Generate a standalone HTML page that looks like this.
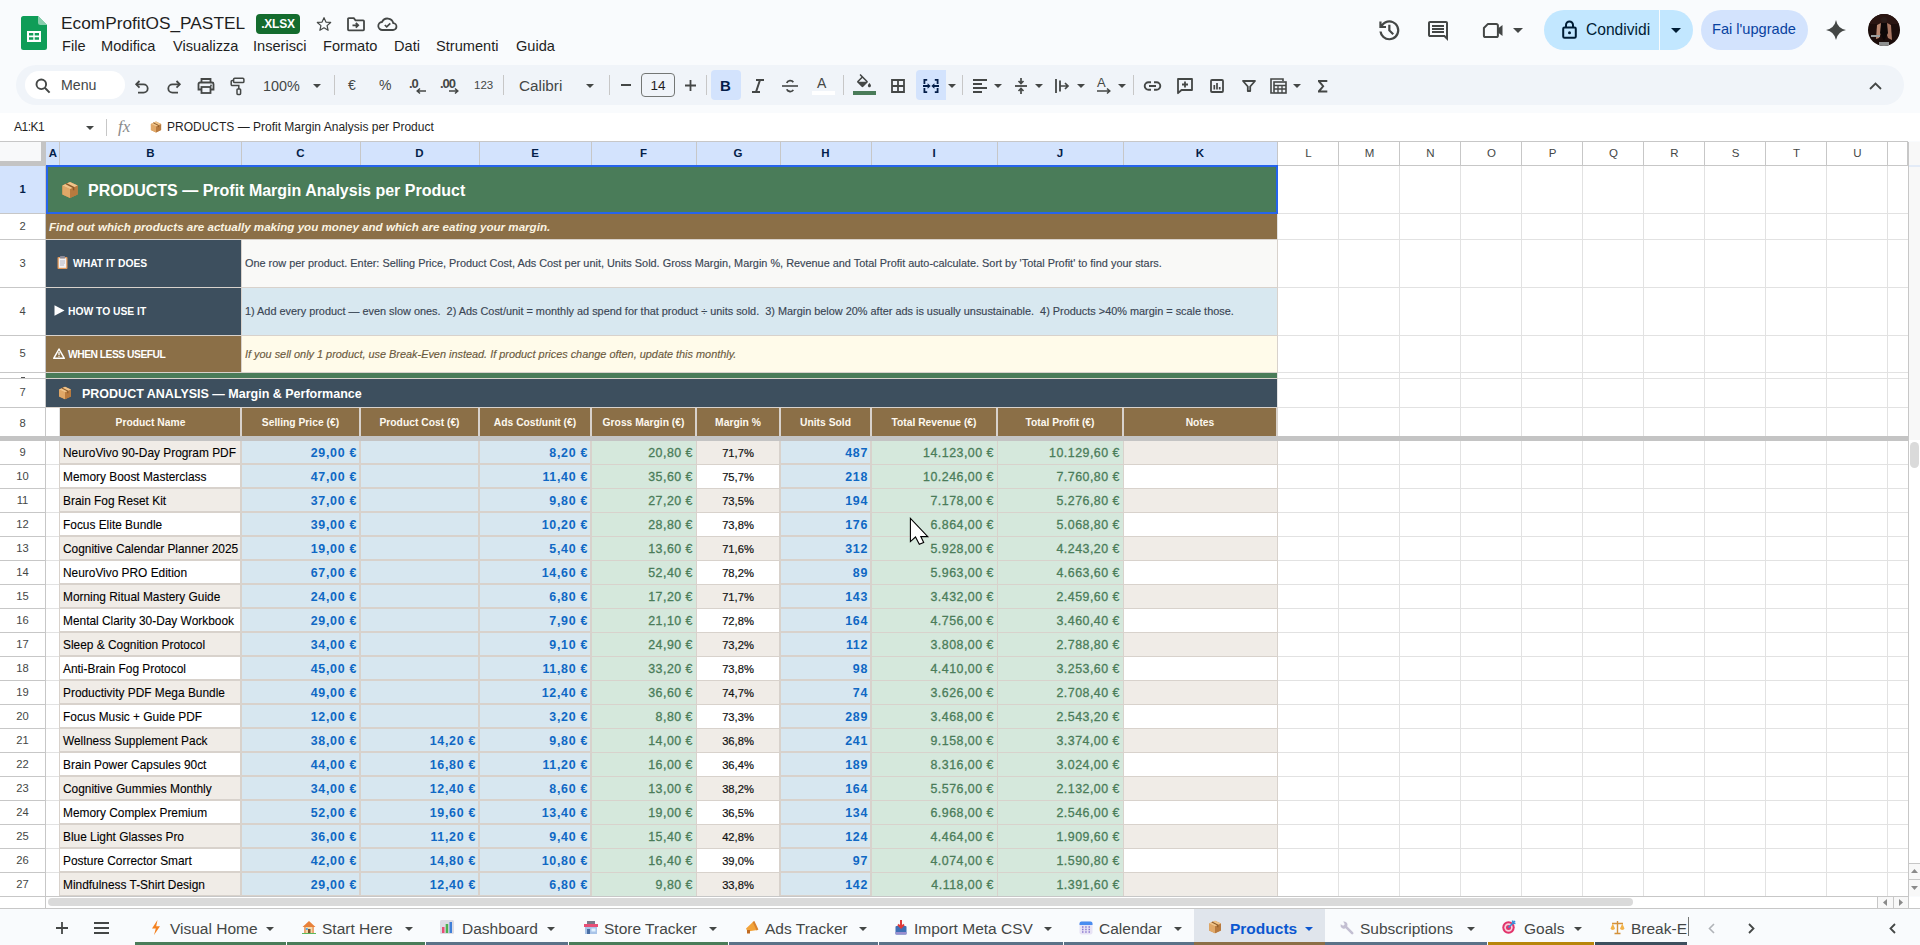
<!DOCTYPE html><html><head><meta charset="utf-8"><style>
*{margin:0;padding:0;box-sizing:border-box}
html,body{width:1920px;height:945px;overflow:hidden;background:#f9fbfd;font-family:"Liberation Sans",sans-serif}
body>div,#grid div{position:absolute}
.t{position:absolute;white-space:nowrap}
svg{position:absolute;overflow:visible}
.c{font-family:"Liberation Sans",sans-serif;white-space:nowrap;overflow:hidden;line-height:1}
</style></head><body>
<svg style="left:21px;top:16px" width="26" height="34" viewBox="0 0 26 34"><path d="M2.5 0H17l9 9v22.5a2.5 2.5 0 0 1-2.5 2.5h-21A2.5 2.5 0 0 1 0 31.5v-29A2.5 2.5 0 0 1 2.5 0z" fill="#0f9d58"/><path d="M17 0l9 9h-6.5A2.5 2.5 0 0 1 17 6.5z" fill="#87ceac"/><path d="M6 15h14v11H6z" fill="#fff"/><path d="M8 17h4.3v2.6H8zM13.7 17H18v2.6h-4.3zM8 21.2h4.3v2.6H8zM13.7 21.2H18v2.6h-4.3z" fill="#0f9d58"/></svg>
<div class="t" style="left:61px;top:13px;font-size:17.3px;color:#1f1f1f;letter-spacing:0px">EcomProfitOS_PASTEL</div>
<div style="left:256px;top:14px;width:44px;height:20px;background:#146c2e;border-radius:4px"></div>
<div class="t" style="left:256px;top:17px;width:44px;text-align:center;font-size:12px;font-weight:bold;color:#fff;letter-spacing:-0.2px">.XLSX</div>
<svg style="left:316px;top:16px" width="16" height="16" viewBox="0 0 24 24"><path d="M12 2.5l2.9 6.6 7.1.6-5.4 4.7 1.6 7-6.2-3.7-6.2 3.7 1.6-7L2 9.7l7.1-.6z" fill="none" stroke="#444746" stroke-width="1.8" stroke-linejoin="round"/></svg>
<svg style="left:347px;top:17px" width="18" height="14" viewBox="0 0 18 14"><path d="M1 2.2V12.5a.8.8 0 0 0 .8.8h14.4a.8.8 0 0 0 .8-.8V4.2a.8.8 0 0 0-.8-.8H8.5L6.8 1.2H1.8a.8.8 0 0 0-.8.8z" fill="none" stroke="#444746" stroke-width="1.8"/><path d="M5.5 8.3h5.2M8.8 6l2.4 2.3-2.4 2.3" fill="none" stroke="#444746" stroke-width="1.8"/></svg>
<svg style="left:378px;top:17px" width="19" height="14" viewBox="0 0 19 14"><path d="M4.6 13H14.8a3.4 3.4 0 0 0 .5-6.8A6 6 0 0 0 4 5a4 4 0 0 0 .6 8z" fill="none" stroke="#444746" stroke-width="1.8"/><path d="M6.8 8l1.9 1.9 3.6-3.6" fill="none" stroke="#444746" stroke-width="1.7"/></svg>
<div class="t" style="left:62px;top:38px;font-size:14.6px;color:#1f1f1f">File</div>
<div class="t" style="left:101px;top:38px;font-size:14.6px;color:#1f1f1f">Modifica</div>
<div class="t" style="left:173px;top:38px;font-size:14.6px;color:#1f1f1f">Visualizza</div>
<div class="t" style="left:253px;top:38px;font-size:14.6px;color:#1f1f1f">Inserisci</div>
<div class="t" style="left:323px;top:38px;font-size:14.6px;color:#1f1f1f">Formato</div>
<div class="t" style="left:394px;top:38px;font-size:14.6px;color:#1f1f1f">Dati</div>
<div class="t" style="left:436px;top:38px;font-size:14.6px;color:#1f1f1f">Strumenti</div>
<div class="t" style="left:516px;top:38px;font-size:14.6px;color:#1f1f1f">Guida</div>
<svg style="left:1375.7px;top:16.7px" width="26.7" height="26.7" viewBox="0 -960 960 960"><path d="M480-120q-138 0-240.5-91.5T122-440h82q14 104 92.5 172T480-200q117 0 198.5-81.5T760-480q0-117-81.5-198.5T480-760q-69 0-129 32t-101 88h110v80H120v-240h80v94q51-64 124.5-99T480-840q75 0 140.5 28.5t114 77q48.5 48.5 77 114T840-480q0 75-28.5 140.5t-77 114q-48.5 48.5-114 77T480-120Zm112-192L440-464v-216h80v184l128 128-56 56Z" fill="#444746"/></svg>
<svg style="left:1426px;top:19px" width="24" height="24" viewBox="0 -960 960 960"><path d="M240-400h480v-80H240v80Zm0-120h480v-80H240v80Zm0-120h480v-80H240v80ZM880-80 720-240H160q-33 0-56.5-23.5T80-320v-480q0-33 23.5-56.5T160-880h640q33 0 56.5 23.5T880-800v720ZM160-320h594l46 45v-525H160v480Zm0 0v-480 480Z" fill="#444746"/></svg>
<svg style="left:1482px;top:22px" width="22" height="17" viewBox="0 0 22 17"><path d="M6 1.9h8.3a1.6 1.6 0 0 1 1.6 1.6v10a1.6 1.6 0 0 1-1.6 1.6H3.5a1.6 1.6 0 0 1-1.6-1.6V6z" fill="none" stroke="#444746" stroke-width="2" stroke-linejoin="round"/><path d="M15.9 6.5L20.5 3v11l-4.6-3.5z" fill="#444746"/></svg>
<svg style="left:1513px;top:28px" width="10" height="5" viewBox="0 0 10 5"><path d="M0 0h10L5 5z" fill="#444746"/></svg>
<div style="left:1544px;top:10px;width:149px;height:40px;background:#c2e7ff;border-radius:20px"></div>
<div style="left:1659px;top:10px;width:1px;height:40px;background:#f9fbfd"></div>
<svg style="left:1562px;top:20px" width="15" height="19" viewBox="0 0 15 19"><rect x="1.2" y="7.5" width="12.6" height="10.3" rx="1.3" fill="none" stroke="#001d35" stroke-width="2"/><path d="M4 7.5V5a3.5 3.5 0 0 1 7 0v2.5" fill="none" stroke="#001d35" stroke-width="2"/><circle cx="7.5" cy="12.7" r="1.5" fill="#001d35"/></svg>
<div class="t" style="left:1586px;top:21px;font-size:15.6px;color:#001d35">Condividi</div>
<svg style="left:1671px;top:28px" width="10" height="5" viewBox="0 0 10 5"><path d="M0 0h10L5 5z" fill="#001d35"/></svg>
<div style="left:1701px;top:10px;width:107px;height:40px;background:#d3e3fd;border-radius:20px"></div>
<div class="t" style="left:1712px;top:21px;font-size:14.6px;color:#0842a0">Fai l'upgrade</div>
<svg style="left:1826px;top:20px" width="20" height="20" viewBox="0 0 20 20"><path d="M10 0Q11.6 8.4 20 10 11.6 11.6 10 20 8.4 11.6 0 10 8.4 8.4 10 0z" fill="#444746"/></svg>
<svg style="left:1868px;top:14px" width="32" height="32" viewBox="0 0 32 32"><defs><clipPath id="av"><circle cx="16" cy="16" r="16"/></clipPath></defs><g clip-path="url(#av)"><rect width="32" height="32" fill="#1c0d0b"/><rect x="0" y="0" width="32" height="10" fill="#2a1512"/><path d="M9 11l4-2 2 6-4 9-3 1z" fill="#b98770"/><path d="M23 11l-4-2-2 6 3 9 4 2z" fill="#a87662"/><path d="M13 9h6l1 10-4 8-4-8z" fill="#0d0808"/><rect x="3" y="21" width="9" height="2" fill="#9aa0a0"/><rect x="11" y="28" width="10" height="4" fill="#8f9090"/><circle cx="16" cy="6" r="3" fill="#2b1d1a"/></g></svg>
<div style="left:16px;top:65px;width:1888px;height:40px;background:#f0f4f9;border-radius:20px"></div>
<div style="left:25px;top:71px;width:100px;height:28px;background:#fff;border-radius:14px"></div>
<svg style="left:35px;top:78px" width="16" height="16" viewBox="0 0 16 16"><circle cx="6.3" cy="6.3" r="4.8" fill="none" stroke="#444746" stroke-width="1.9"/><path d="M9.8 9.8l4.8 4.8" stroke="#444746" stroke-width="2"/></svg>
<div class="t" style="left:61px;top:77px;font-size:14.2px;color:#444746">Menu</div>
<svg style="left:135px;top:80px" width="14" height="13" viewBox="0 0 14 13"><path d="M4.5 1L1.2 4.3l3.3 3.3" fill="none" stroke="#444746" stroke-width="1.8"/><path d="M1.5 4.3H8.5a4.2 4.2 0 0 1 0 8.4H3" fill="none" stroke="#444746" stroke-width="1.8"/></svg>
<svg style="left:167px;top:80px" width="14" height="13" viewBox="0 0 14 13"><path d="M9.5 1l3.3 3.3-3.3 3.3" fill="none" stroke="#444746" stroke-width="1.8"/><path d="M12.5 4.3H5.5a4.2 4.2 0 0 0 0 8.4H11" fill="none" stroke="#444746" stroke-width="1.8"/></svg>
<svg style="left:197px;top:78px" width="18" height="16" viewBox="0 0 18 16"><path d="M4.5 4.5V1h9v3.5" fill="none" stroke="#444746" stroke-width="1.8"/><path d="M4.5 11.5H1.5V6a1.5 1.5 0 0 1 1.5-1.5h12A1.5 1.5 0 0 1 16.5 6v5.5h-3" fill="none" stroke="#444746" stroke-width="1.8"/><rect x="4.5" y="9" width="9" height="6" fill="none" stroke="#444746" stroke-width="1.8"/><circle cx="14" cy="7.3" r=".9" fill="#444746"/></svg>
<svg style="left:228px;top:76px" width="18" height="20" viewBox="0 0 18 20"><rect x="5.6" y="2.3" width="10.3" height="4.2" rx="1.1" fill="none" stroke="#444746" stroke-width="1.5"/><path d="M5.6 4.4H4.3a1.1 1.1 0 0 0-1.1 1.1v3a1.1 1.1 0 0 0 1.1 1.1h6.5v3.4" fill="none" stroke="#444746" stroke-width="1.5"/><rect x="9" y="13" width="3.6" height="5.4" rx=".8" fill="none" stroke="#444746" stroke-width="1.5"/></svg>
<div class="t" style="left:263px;top:78px;font-size:14.4px;color:#444746">100%</div>
<svg style="left:313px;top:84px" width="8" height="4" viewBox="0 0 8 4"><path d="M0 0h8L4 4z" fill="#444746"/></svg>
<div style="left:334px;top:75px;width:1px;height:20px;background:#c7c7c7"></div>
<div class="t" style="left:348px;top:77px;font-size:14px;color:#444746">€</div>
<div class="t" style="left:379px;top:77px;font-size:14px;color:#444746">%</div>
<div class="t" style="left:409px;top:76px;font-size:13px;font-weight:bold;color:#444746;letter-spacing:-1px">.0</div>
<svg style="left:416px;top:88px" width="10" height="6" viewBox="0 0 10 6"><path d="M10 3H2M4 .5L1.2 3 4 5.5" fill="none" stroke="#444746" stroke-width="1.5"/></svg>
<div class="t" style="left:440px;top:76px;font-size:13px;font-weight:bold;color:#444746;letter-spacing:-1px">.00</div>
<svg style="left:449px;top:88px" width="10" height="6" viewBox="0 0 10 6"><path d="M0 3h8M6 .5L8.8 3 6 5.5" fill="none" stroke="#444746" stroke-width="1.5"/></svg>
<div class="t" style="left:474px;top:79px;font-size:11.5px;color:#444746">123</div>
<div style="left:503px;top:75px;width:1px;height:20px;background:#c7c7c7"></div>
<div class="t" style="left:519px;top:77px;font-size:15.3px;color:#444746">Calibri</div>
<svg style="left:586px;top:84px" width="8" height="4" viewBox="0 0 8 4"><path d="M0 0h8L4 4z" fill="#444746"/></svg>
<div style="left:609px;top:75px;width:1px;height:20px;background:#c7c7c7"></div>
<div style="left:621px;top:84px;width:10px;height:1.8px;background:#444746"></div>
<div style="left:641px;top:73px;width:34px;height:24px;border:1px solid #747775;border-radius:4px"></div>
<div class="t" style="left:641px;top:78px;width:34px;text-align:center;font-size:13.5px;color:#1f1f1f">14</div>
<svg style="left:685px;top:80px" width="11" height="11" viewBox="0 0 11 11"><path d="M5.5 0v11M0 5.5h11" stroke="#444746" stroke-width="1.8"/></svg>
<div style="left:706px;top:75px;width:1px;height:20px;background:#c7c7c7"></div>
<div style="left:711px;top:70px;width:30px;height:30px;background:#d3e3fd;border-radius:4px"></div>
<div class="t" style="left:720px;top:77px;font-size:15px;font-weight:bold;color:#041e49">B</div>
<svg style="left:752px;top:79px" width="12" height="14" viewBox="0 0 12 14"><path d="M4 1h8M0 13h8M8 1L4 13" fill="none" stroke="#444746" stroke-width="2"/></svg>
<svg style="left:782px;top:78px" width="16" height="16" viewBox="0 0 16 16"><path d="M0 8h16" stroke="#444746" stroke-width="1.6"/><path d="M11.3 4.3A3.5 3 0 0 0 4.8 5M4.8 11.3a3.5 3 0 0 0 6.5.6" fill="none" stroke="#444746" stroke-width="1.8"/></svg>
<div class="t" style="left:817px;top:75px;font-size:14px;color:#444746">A</div>
<div style="left:812px;top:91px;width:23px;height:4px;background:#fff"></div>
<div style="left:843px;top:75px;width:1px;height:20px;background:#c7c7c7"></div>
<svg style="left:857px;top:74px" width="14" height="13.2" viewBox="3 0 18 17"><path d="M16.56 8.94L7.62 0 6.21 1.41l2.38 2.38-5.15 5.15c-.59.59-.59 1.54 0 2.12l5.5 5.5c.29.29.68.44 1.06.44s.77-.15 1.06-.44l5.5-5.5c.59-.58.59-1.53 0-2.12zM5.21 10L10 5.21 14.79 10H5.21zM19 11.5s-2 2.17-2 3.5c0 1.1.9 2 2 2s2-.9 2-2c0-1.33-2-3.5-2-3.5z" fill="#444746"/></svg>
<div style="left:853px;top:91px;width:23px;height:4px;background:#4a7c59"></div>
<svg style="left:891px;top:79px" width="14" height="14" viewBox="0 0 14 14"><path d="M1 1h12v12H1zM7 1v12M1 7h12" fill="none" stroke="#444746" stroke-width="1.8"/></svg>
<div style="left:916px;top:70px;width:30px;height:30px;background:#d3e3fd;border-radius:4px 0 0 4px"></div>
<svg style="left:923px;top:79px" width="16" height="14" viewBox="0 0 16 14"><path d="M4.2 .9H1.4V5M1.4 9v4.1h2.8M11.8 .9h2.8V5M14.6 9v4.1h-2.8" fill="none" stroke="#041e49" stroke-width="1.8"/><path d="M0 7h5.5M16 7h-5.5" stroke="#041e49" stroke-width="1.8"/><path d="M4.6 4.2L7.6 7l-3 2.8zM11.4 4.2L8.4 7l3 2.8z" fill="#041e49"/></svg>
<svg style="left:948px;top:84px" width="8" height="4" viewBox="0 0 8 4"><path d="M0 0h8L4 4z" fill="#444746"/></svg>
<div style="left:962px;top:75px;width:1px;height:20px;background:#c7c7c7"></div>
<svg style="left:973px;top:79px" width="14" height="14" viewBox="0 0 14 14"><path d="M0 1h14M0 5h9M0 9h14M0 13h9" stroke="#444746" stroke-width="1.8"/></svg>
<svg style="left:994px;top:84px" width="8" height="4" viewBox="0 0 8 4"><path d="M0 0h8L4 4z" fill="#444746"/></svg>
<svg style="left:1015px;top:78px" width="12" height="16" viewBox="0 0 12 16"><path d="M0 8h12" stroke="#444746" stroke-width="1.8"/><path d="M6 0v5.5M3.5 3L6 5.5 8.5 3M6 16v-5.5M3.5 13L6 10.5 8.5 13" fill="none" stroke="#444746" stroke-width="1.7"/></svg>
<svg style="left:1035px;top:84px" width="8" height="4" viewBox="0 0 8 4"><path d="M0 0h8L4 4z" fill="#444746"/></svg>
<svg style="left:1055px;top:78px" width="14" height="16" viewBox="0 0 14 16"><path d="M1 1v14M5 2.5v11" stroke="#444746" stroke-width="1.8"/><path d="M5 8h8M10 5l3 3-3 3" fill="none" stroke="#444746" stroke-width="1.7"/></svg>
<svg style="left:1077px;top:84px" width="8" height="4" viewBox="0 0 8 4"><path d="M0 0h8L4 4z" fill="#444746"/></svg>
<div class="t" style="left:1097px;top:75px;font-size:13px;color:#444746">A</div>
<svg style="left:1097px;top:88px" width="14" height="6" viewBox="0 0 14 6"><path d="M0 3h12M10 .5L12.8 3 10 5.5" fill="none" stroke="#444746" stroke-width="1.5"/></svg>
<svg style="left:1118px;top:84px" width="8" height="4" viewBox="0 0 8 4"><path d="M0 0h8L4 4z" fill="#444746"/></svg>
<div style="left:1133px;top:75px;width:1px;height:20px;background:#c7c7c7"></div>
<svg style="left:1144px;top:81px" width="17" height="10" viewBox="0 0 17 10"><path d="M7 1.2H4.5a3.8 3.8 0 0 0 0 7.6H7M10 1.2h2.5a3.8 3.8 0 0 1 0 7.6H10M5 5h7" fill="none" stroke="#444746" stroke-width="1.9"/></svg>
<svg style="left:1177px;top:78px" width="16" height="16" viewBox="0 0 16 16"><path d="M1 1h14v11H4.5L1 15.2z" fill="none" stroke="#444746" stroke-width="1.8" stroke-linejoin="round"/><path d="M8 3.5v6M5 6.5h6" stroke="#444746" stroke-width="1.8"/></svg>
<svg style="left:1210px;top:79px" width="14" height="14" viewBox="0 0 14 14"><rect x="1" y="1" width="12" height="12" rx="1" fill="none" stroke="#444746" stroke-width="1.8"/><path d="M4.3 6v4.5M7 4v6.5M9.7 8v2.5" stroke="#444746" stroke-width="1.7"/></svg>
<svg style="left:1242px;top:80px" width="14" height="12" viewBox="0 0 14 12"><path d="M1 1h12L8.2 6.5V11H5.8V6.5z" fill="none" stroke="#444746" stroke-width="1.8" stroke-linejoin="round"/></svg>
<svg style="left:1270px;top:78px" width="17" height="16" viewBox="0 0 17 16"><path d="M3.5 15H1V1h12v2" fill="none" stroke="#444746" stroke-width="1.6"/><rect x="4" y="4" width="12" height="11" fill="none" stroke="#444746" stroke-width="1.6"/><path d="M4 7.5h12M4 11h12M8 7.5V15M12 7.5V15" stroke="#444746" stroke-width="1.3"/></svg>
<svg style="left:1293px;top:84px" width="8" height="4" viewBox="0 0 8 4"><path d="M0 0h8L4 4z" fill="#444746"/></svg>
<svg style="left:1318px;top:80px" width="9.5" height="12.5" viewBox="0 0 9.5 12.5"><path d="M0 0h9.3v1.9H2.9L6.4 6.25 2.9 10.6h6.4v1.9H0v-1.7L4 6.25 0 1.7z" fill="#444746"/></svg>
<svg style="left:1869px;top:82px" width="13" height="8" viewBox="0 0 13 8"><path d="M1 7L6.5 1.5 12 7" fill="none" stroke="#444746" stroke-width="1.8"/></svg>
<div style="left:0;top:113px;width:1920px;height:28px;background:#fff"></div>
<div class="t" style="left:14px;top:120px;font-size:12px;letter-spacing:-0.5px;color:#1f1f1f">A1:K1</div>
<svg style="left:86px;top:126px" width="8" height="4" viewBox="0 0 8 4"><path d="M0 0h8L4 4z" fill="#444746"/></svg>
<div style="left:106px;top:119px;width:1px;height:17px;background:#c7c7c7"></div>
<div class="t" style="left:118px;top:117px;font-size:17px;font-style:italic;color:#8a8a8a;font-family:'Liberation Serif',serif">fx</div>
<svg style="left:150px;top:121px" width="12" height="12" viewBox="0 0 20 20"><path d="M10 1L18.5 5v10L10 19 1.5 15V5z" fill="#c98a4b"/><path d="M1.5 5L10 9v10L1.5 15z" fill="#e0a868"/><path d="M10 9L18.5 5v10L10 19z" fill="#b87a3e"/><path d="M10 1L18.5 5 10 9 1.5 5z" fill="#f0c48a"/><path d="M5.5 3L14 7.2v3" fill="none" stroke="#8a5a2a" stroke-width="1.6"/></svg>
<div class="t" style="left:167px;top:120px;font-size:12px;color:#1f1f1f">PRODUCTS — Profit Margin Analysis per Product</div>
<div style="left:0;top:141px;width:1908px;height:1px;background:#c7c7c7"></div>
<div style="left:0;top:142px;width:41px;height:19px;background:#f8f9fa"></div>
<div style="left:41px;top:142px;width:5px;height:24px;background:#c4c4c4"></div>
<div style="left:0;top:161px;width:46px;height:5px;background:#c4c4c4"></div>
<div style="left:46px;top:142px;width:1231px;height:23px;background:#d3e3fd"></div>
<div style="left:1277px;top:142px;width:631px;height:23px;background:#fff"></div>
<div style="left:46px;top:165px;width:1862px;height:1px;background:#c7c7c7"></div>
<div class="t" style="left:46px;top:147px;width:14px;text-align:center;font-size:11.5px;font-weight:bold;color:#041e49">A</div>
<div class="t" style="left:60px;top:147px;width:181px;text-align:center;font-size:11.5px;font-weight:bold;color:#041e49">B</div>
<div style="left:59px;top:142px;width:1px;height:23px;background:#c7c7c7"></div>
<div class="t" style="left:241px;top:147px;width:119px;text-align:center;font-size:11.5px;font-weight:bold;color:#041e49">C</div>
<div style="left:241px;top:142px;width:1px;height:23px;background:#c7c7c7"></div>
<div class="t" style="left:360px;top:147px;width:119px;text-align:center;font-size:11.5px;font-weight:bold;color:#041e49">D</div>
<div style="left:360px;top:142px;width:1px;height:23px;background:#c7c7c7"></div>
<div class="t" style="left:479px;top:147px;width:112px;text-align:center;font-size:11.5px;font-weight:bold;color:#041e49">E</div>
<div style="left:479px;top:142px;width:1px;height:23px;background:#c7c7c7"></div>
<div class="t" style="left:591px;top:147px;width:105px;text-align:center;font-size:11.5px;font-weight:bold;color:#041e49">F</div>
<div style="left:591px;top:142px;width:1px;height:23px;background:#c7c7c7"></div>
<div class="t" style="left:696px;top:147px;width:84px;text-align:center;font-size:11.5px;font-weight:bold;color:#041e49">G</div>
<div style="left:696px;top:142px;width:1px;height:23px;background:#c7c7c7"></div>
<div class="t" style="left:780px;top:147px;width:91px;text-align:center;font-size:11.5px;font-weight:bold;color:#041e49">H</div>
<div style="left:780px;top:142px;width:1px;height:23px;background:#c7c7c7"></div>
<div class="t" style="left:871px;top:147px;width:126px;text-align:center;font-size:11.5px;font-weight:bold;color:#041e49">I</div>
<div style="left:871px;top:142px;width:1px;height:23px;background:#c7c7c7"></div>
<div class="t" style="left:997px;top:147px;width:126px;text-align:center;font-size:11.5px;font-weight:bold;color:#041e49">J</div>
<div style="left:997px;top:142px;width:1px;height:23px;background:#c7c7c7"></div>
<div class="t" style="left:1123px;top:147px;width:154px;text-align:center;font-size:11.5px;font-weight:bold;color:#041e49">K</div>
<div style="left:1123px;top:142px;width:1px;height:23px;background:#c7c7c7"></div>
<div class="t" style="left:1278px;top:147px;width:61px;text-align:center;font-size:11.5px;font-weight:normal;color:#444746">L</div>
<div style="left:1277px;top:142px;width:1px;height:23px;background:#c7c7c7"></div>
<div class="t" style="left:1339px;top:147px;width:61px;text-align:center;font-size:11.5px;font-weight:normal;color:#444746">M</div>
<div style="left:1338px;top:142px;width:1px;height:23px;background:#c7c7c7"></div>
<div class="t" style="left:1400px;top:147px;width:61px;text-align:center;font-size:11.5px;font-weight:normal;color:#444746">N</div>
<div style="left:1399px;top:142px;width:1px;height:23px;background:#c7c7c7"></div>
<div class="t" style="left:1461px;top:147px;width:61px;text-align:center;font-size:11.5px;font-weight:normal;color:#444746">O</div>
<div style="left:1460px;top:142px;width:1px;height:23px;background:#c7c7c7"></div>
<div class="t" style="left:1522px;top:147px;width:61px;text-align:center;font-size:11.5px;font-weight:normal;color:#444746">P</div>
<div style="left:1521px;top:142px;width:1px;height:23px;background:#c7c7c7"></div>
<div class="t" style="left:1583px;top:147px;width:61px;text-align:center;font-size:11.5px;font-weight:normal;color:#444746">Q</div>
<div style="left:1582px;top:142px;width:1px;height:23px;background:#c7c7c7"></div>
<div class="t" style="left:1644px;top:147px;width:61px;text-align:center;font-size:11.5px;font-weight:normal;color:#444746">R</div>
<div style="left:1643px;top:142px;width:1px;height:23px;background:#c7c7c7"></div>
<div class="t" style="left:1705px;top:147px;width:61px;text-align:center;font-size:11.5px;font-weight:normal;color:#444746">S</div>
<div style="left:1704px;top:142px;width:1px;height:23px;background:#c7c7c7"></div>
<div class="t" style="left:1766px;top:147px;width:61px;text-align:center;font-size:11.5px;font-weight:normal;color:#444746">T</div>
<div style="left:1765px;top:142px;width:1px;height:23px;background:#c7c7c7"></div>
<div class="t" style="left:1827px;top:147px;width:61px;text-align:center;font-size:11.5px;font-weight:normal;color:#444746">U</div>
<div style="left:1826px;top:142px;width:1px;height:23px;background:#c7c7c7"></div>
<div style="left:1887px;top:142px;width:1px;height:23px;background:#c7c7c7"></div>
<div style="left:1907px;top:142px;width:1px;height:23px;background:#c7c7c7"></div>
<div style="left:0;top:166px;width:45px;height:730px;background:#fff"></div>
<div style="left:0;top:166px;width:45px;height:47px;background:#d3e3fd"></div>
<div style="left:45px;top:166px;width:1px;height:730px;background:#c7c7c7"></div>
<div class="t" style="left:0;top:183px;width:45px;text-align:center;font-size:11.2px;font-weight:bold;color:#041e49">1</div>
<div class="t" style="left:0;top:220px;width:45px;text-align:center;font-size:11.2px;color:#444746">2</div>
<div class="t" style="left:0;top:257px;width:45px;text-align:center;font-size:11.2px;color:#444746">3</div>
<div class="t" style="left:0;top:305px;width:45px;text-align:center;font-size:11.2px;color:#444746">4</div>
<div class="t" style="left:0;top:347px;width:45px;text-align:center;font-size:11.2px;color:#444746">5</div>
<div class="t" style="left:0;top:386px;width:45px;text-align:center;font-size:11.2px;color:#444746">7</div>
<div class="t" style="left:0;top:417px;width:45px;text-align:center;font-size:11.2px;color:#444746">8</div>
<div class="t" style="left:0;top:446px;width:45px;text-align:center;font-size:11.2px;color:#444746">9</div>
<div class="t" style="left:0;top:470px;width:45px;text-align:center;font-size:11.2px;color:#444746">10</div>
<div class="t" style="left:0;top:494px;width:45px;text-align:center;font-size:11.2px;color:#444746">11</div>
<div class="t" style="left:0;top:518px;width:45px;text-align:center;font-size:11.2px;color:#444746">12</div>
<div class="t" style="left:0;top:542px;width:45px;text-align:center;font-size:11.2px;color:#444746">13</div>
<div class="t" style="left:0;top:566px;width:45px;text-align:center;font-size:11.2px;color:#444746">14</div>
<div class="t" style="left:0;top:590px;width:45px;text-align:center;font-size:11.2px;color:#444746">15</div>
<div class="t" style="left:0;top:614px;width:45px;text-align:center;font-size:11.2px;color:#444746">16</div>
<div class="t" style="left:0;top:638px;width:45px;text-align:center;font-size:11.2px;color:#444746">17</div>
<div class="t" style="left:0;top:662px;width:45px;text-align:center;font-size:11.2px;color:#444746">18</div>
<div class="t" style="left:0;top:686px;width:45px;text-align:center;font-size:11.2px;color:#444746">19</div>
<div class="t" style="left:0;top:710px;width:45px;text-align:center;font-size:11.2px;color:#444746">20</div>
<div class="t" style="left:0;top:734px;width:45px;text-align:center;font-size:11.2px;color:#444746">21</div>
<div class="t" style="left:0;top:758px;width:45px;text-align:center;font-size:11.2px;color:#444746">22</div>
<div class="t" style="left:0;top:782px;width:45px;text-align:center;font-size:11.2px;color:#444746">23</div>
<div class="t" style="left:0;top:806px;width:45px;text-align:center;font-size:11.2px;color:#444746">24</div>
<div class="t" style="left:0;top:830px;width:45px;text-align:center;font-size:11.2px;color:#444746">25</div>
<div class="t" style="left:0;top:854px;width:45px;text-align:center;font-size:11.2px;color:#444746">26</div>
<div class="t" style="left:0;top:878px;width:45px;text-align:center;font-size:11.2px;color:#444746">27</div>
<div style="left:0;top:213px;width:45px;height:1px;background:#c7c7c7"></div>
<div style="left:0;top:239px;width:45px;height:1px;background:#c7c7c7"></div>
<div style="left:0;top:287px;width:45px;height:1px;background:#c7c7c7"></div>
<div style="left:0;top:335px;width:45px;height:1px;background:#c7c7c7"></div>
<div style="left:0;top:372px;width:45px;height:1px;background:#c7c7c7"></div>
<div style="left:0;top:378px;width:45px;height:1px;background:#c7c7c7"></div>
<div style="left:0;top:407px;width:45px;height:1px;background:#c7c7c7"></div>
<div style="left:0;top:464px;width:45px;height:1px;background:#c7c7c7"></div>
<div style="left:0;top:488px;width:45px;height:1px;background:#c7c7c7"></div>
<div style="left:0;top:512px;width:45px;height:1px;background:#c7c7c7"></div>
<div style="left:0;top:536px;width:45px;height:1px;background:#c7c7c7"></div>
<div style="left:0;top:560px;width:45px;height:1px;background:#c7c7c7"></div>
<div style="left:0;top:584px;width:45px;height:1px;background:#c7c7c7"></div>
<div style="left:0;top:608px;width:45px;height:1px;background:#c7c7c7"></div>
<div style="left:0;top:632px;width:45px;height:1px;background:#c7c7c7"></div>
<div style="left:0;top:656px;width:45px;height:1px;background:#c7c7c7"></div>
<div style="left:0;top:680px;width:45px;height:1px;background:#c7c7c7"></div>
<div style="left:0;top:704px;width:45px;height:1px;background:#c7c7c7"></div>
<div style="left:0;top:728px;width:45px;height:1px;background:#c7c7c7"></div>
<div style="left:0;top:752px;width:45px;height:1px;background:#c7c7c7"></div>
<div style="left:0;top:776px;width:45px;height:1px;background:#c7c7c7"></div>
<div style="left:0;top:800px;width:45px;height:1px;background:#c7c7c7"></div>
<div style="left:0;top:824px;width:45px;height:1px;background:#c7c7c7"></div>
<div style="left:0;top:848px;width:45px;height:1px;background:#c7c7c7"></div>
<div style="left:0;top:872px;width:45px;height:1px;background:#c7c7c7"></div>
<div style="left:0;top:896px;width:45px;height:1px;background:#c7c7c7"></div>
<div style="left:21px;top:377px;width:4px;height:1px;background:#555"></div>
<div style="left:46px;top:166px;width:1862px;height:730px;background:#fff"></div>
<div style="left:59px;top:166px;width:1px;height:730px;background:#e2e2e2"></div>
<div style="left:241px;top:166px;width:1px;height:730px;background:#e2e2e2"></div>
<div style="left:360px;top:166px;width:1px;height:730px;background:#e2e2e2"></div>
<div style="left:479px;top:166px;width:1px;height:730px;background:#e2e2e2"></div>
<div style="left:591px;top:166px;width:1px;height:730px;background:#e2e2e2"></div>
<div style="left:696px;top:166px;width:1px;height:730px;background:#e2e2e2"></div>
<div style="left:780px;top:166px;width:1px;height:730px;background:#e2e2e2"></div>
<div style="left:871px;top:166px;width:1px;height:730px;background:#e2e2e2"></div>
<div style="left:997px;top:166px;width:1px;height:730px;background:#e2e2e2"></div>
<div style="left:1123px;top:166px;width:1px;height:730px;background:#e2e2e2"></div>
<div style="left:1277px;top:166px;width:1px;height:730px;background:#e2e2e2"></div>
<div style="left:1338px;top:166px;width:1px;height:730px;background:#e2e2e2"></div>
<div style="left:1399px;top:166px;width:1px;height:730px;background:#e2e2e2"></div>
<div style="left:1460px;top:166px;width:1px;height:730px;background:#e2e2e2"></div>
<div style="left:1521px;top:166px;width:1px;height:730px;background:#e2e2e2"></div>
<div style="left:1582px;top:166px;width:1px;height:730px;background:#e2e2e2"></div>
<div style="left:1643px;top:166px;width:1px;height:730px;background:#e2e2e2"></div>
<div style="left:1704px;top:166px;width:1px;height:730px;background:#e2e2e2"></div>
<div style="left:1765px;top:166px;width:1px;height:730px;background:#e2e2e2"></div>
<div style="left:1826px;top:166px;width:1px;height:730px;background:#e2e2e2"></div>
<div style="left:1887px;top:166px;width:1px;height:730px;background:#e2e2e2"></div>
<div style="left:46px;top:213px;width:1862px;height:1px;background:#e2e2e2"></div>
<div style="left:46px;top:239px;width:1862px;height:1px;background:#e2e2e2"></div>
<div style="left:46px;top:287px;width:1862px;height:1px;background:#e2e2e2"></div>
<div style="left:46px;top:335px;width:1862px;height:1px;background:#e2e2e2"></div>
<div style="left:46px;top:372px;width:1862px;height:1px;background:#e2e2e2"></div>
<div style="left:46px;top:378px;width:1862px;height:1px;background:#e2e2e2"></div>
<div style="left:46px;top:407px;width:1862px;height:1px;background:#e2e2e2"></div>
<div style="left:46px;top:464px;width:1862px;height:1px;background:#e2e2e2"></div>
<div style="left:46px;top:488px;width:1862px;height:1px;background:#e2e2e2"></div>
<div style="left:46px;top:512px;width:1862px;height:1px;background:#e2e2e2"></div>
<div style="left:46px;top:536px;width:1862px;height:1px;background:#e2e2e2"></div>
<div style="left:46px;top:560px;width:1862px;height:1px;background:#e2e2e2"></div>
<div style="left:46px;top:584px;width:1862px;height:1px;background:#e2e2e2"></div>
<div style="left:46px;top:608px;width:1862px;height:1px;background:#e2e2e2"></div>
<div style="left:46px;top:632px;width:1862px;height:1px;background:#e2e2e2"></div>
<div style="left:46px;top:656px;width:1862px;height:1px;background:#e2e2e2"></div>
<div style="left:46px;top:680px;width:1862px;height:1px;background:#e2e2e2"></div>
<div style="left:46px;top:704px;width:1862px;height:1px;background:#e2e2e2"></div>
<div style="left:46px;top:728px;width:1862px;height:1px;background:#e2e2e2"></div>
<div style="left:46px;top:752px;width:1862px;height:1px;background:#e2e2e2"></div>
<div style="left:46px;top:776px;width:1862px;height:1px;background:#e2e2e2"></div>
<div style="left:46px;top:800px;width:1862px;height:1px;background:#e2e2e2"></div>
<div style="left:46px;top:824px;width:1862px;height:1px;background:#e2e2e2"></div>
<div style="left:46px;top:848px;width:1862px;height:1px;background:#e2e2e2"></div>
<div style="left:46px;top:872px;width:1862px;height:1px;background:#e2e2e2"></div>
<div style="left:46px;top:896px;width:1862px;height:1px;background:#e2e2e2"></div>
<div style="left:0;top:436px;width:1908px;height:5px;background:#c4c4c4"></div>
<div style="left:46px;top:166px;width:1231px;height:47px;background:#4a7c59;"></div>
<svg style="left:61px;top:181px" width="18" height="18" viewBox="0 0 20 20"><path d="M10 1L18.5 5v10L10 19 1.5 15V5z" fill="#c98a4b"/><path d="M1.5 5L10 9v10L1.5 15z" fill="#e0a868"/><path d="M10 9L18.5 5v10L10 19z" fill="#b87a3e"/><path d="M10 1L18.5 5 10 9 1.5 5z" fill="#f0c48a"/><path d="M5.5 3L14 7.2v3" fill="none" stroke="#8a5a2a" stroke-width="1.6"/></svg>
<div class="t" style="left:88px;top:182px;font-size:16px;font-weight:bold;color:#fff">PRODUCTS — Profit Margin Analysis per Product</div>
<div style="left:46px;top:214px;width:1231px;height:25px;background:#8b6f47;"></div>
<div class="t" style="left:49px;top:220px;font-size:11.6px;font-weight:bold;font-style:italic;color:#fbf4e2">Find out which products are actually making you money and which are eating your margin.</div>
<div style="left:46px;top:240px;width:195px;height:47px;background:#3d4f5e;"></div>
<div style="left:46px;top:288px;width:195px;height:47px;background:#3d4f5e;"></div>
<div style="left:46px;top:336px;width:195px;height:36px;background:#8b6f47;"></div>
<div style="left:241px;top:240px;width:1036px;height:47px;background:#f9f9f7;"></div>
<div style="left:241px;top:288px;width:1036px;height:47px;background:#d8e8f0;"></div>
<div style="left:241px;top:336px;width:1036px;height:36px;background:#fffbea;"></div>
<div style="left:241px;top:240px;width:1px;height:47px;background:#d8d2cc"></div>
<div style="left:1277px;top:240px;width:1px;height:47px;background:#d8d2cc"></div>
<div style="left:241px;top:288px;width:1px;height:47px;background:#d8d2cc"></div>
<div style="left:1277px;top:288px;width:1px;height:47px;background:#d8d2cc"></div>
<div style="left:241px;top:336px;width:1px;height:36px;background:#d8d2cc"></div>
<div style="left:1277px;top:336px;width:1px;height:36px;background:#d8d2cc"></div>
<div style="left:46px;top:239px;width:1232px;height:1px;background:#d8d2cc"></div>
<div style="left:46px;top:287px;width:1232px;height:1px;background:#d8d2cc"></div>
<div style="left:46px;top:335px;width:1232px;height:1px;background:#d8d2cc"></div>
<div style="left:46px;top:372px;width:1232px;height:1px;background:#d8d2cc"></div>
<div style="left:46px;top:378px;width:1232px;height:1px;background:#d8d2cc"></div>
<div style="left:46px;top:407px;width:1232px;height:1px;background:#d8d2cc"></div>
<svg style="left:57px;top:256px" width="11" height="13" viewBox="0 0 11 13"><rect x=".5" y="1" width="10" height="12" rx="1" fill="#e39a5a"/><rect x="1.8" y="2.2" width="7.4" height="9.6" fill="#f1f1f4"/><rect x="3" y="0" width="5" height="2.5" rx=".6" fill="#8a8a98"/><path d="M3 5h5M3 7h5M3 9h4" stroke="#a8a8b8" stroke-width=".8"/></svg>
<div class="t" style="left:73px;top:258px;font-size:10.3px;font-weight:bold;color:#fff">WHAT IT DOES</div>
<svg style="left:54px;top:305px" width="11" height="11" viewBox="0 0 11 11"><path d="M0.5 0.3L10.5 5.5 0.5 10.7z" fill="#fff"/></svg>
<div class="t" style="left:68px;top:306px;font-size:10.3px;font-weight:bold;color:#fff">HOW TO USE IT</div>
<svg style="left:53px;top:348px" width="12" height="11" viewBox="0 0 12 11"><path d="M6 1L11.3 10.3H.7z" fill="none" stroke="#fff" stroke-width="1.5" stroke-linejoin="round"/><path d="M6 4v3.3" stroke="#fff" stroke-width="1.3"/><circle cx="6" cy="8.6" r=".7" fill="#fff"/></svg>
<div class="t" style="left:68px;top:349px;font-size:10.3px;letter-spacing:-0.5px;font-weight:bold;color:#fff">WHEN LESS USEFUL</div>
<div class="t" style="left:245px;top:257px;font-size:10.9px;color:#3a4654;-webkit-text-stroke:0.15px #3a4654">One row per product. Enter: Selling Price, Product Cost, Ads Cost per unit, Units Sold. Gross Margin, Margin %, Revenue and Total Profit auto-calculate. Sort by 'Total Profit' to find your stars.</div>
<div class="t" style="left:245px;top:305px;font-size:10.9px;color:#3a4654;-webkit-text-stroke:0.15px #3a4654">1) Add every product — even slow ones.&nbsp; 2) Ads Cost/unit = monthly ad spend for that product ÷ units sold.&nbsp; 3) Margin below 20% after ads is usually unsustainable.&nbsp; 4) Products &gt;40% margin = scale those.</div>
<div class="t" style="left:245px;top:348px;font-size:10.9px;font-style:italic;color:#6b5a3e;-webkit-text-stroke:0.15px #6b5a3e">If you sell only 1 product, use Break-Even instead. If product prices change often, update this monthly.</div>
<div style="left:46px;top:373px;width:1231px;height:5px;background:#4a7c59;"></div>
<div style="left:46px;top:379px;width:1231px;height:28px;background:#3d4f5e;"></div>
<svg style="left:58px;top:386px" width="14" height="14" viewBox="0 0 20 20"><path d="M10 1L18.5 5v10L10 19 1.5 15V5z" fill="#c98a4b"/><path d="M1.5 5L10 9v10L1.5 15z" fill="#e0a868"/><path d="M10 9L18.5 5v10L10 19z" fill="#b87a3e"/><path d="M10 1L18.5 5 10 9 1.5 5z" fill="#f0c48a"/><path d="M5.5 3L14 7.2v3" fill="none" stroke="#8a5a2a" stroke-width="1.6"/></svg>
<div class="t" style="left:82px;top:387px;font-size:12.5px;font-weight:bold;color:#fff">PRODUCT ANALYSIS — Margin &amp; Performance</div>
<div style="left:60px;top:408px;width:1217px;height:28px;background:#8b6f47"></div>
<div class="t" style="left:60px;top:417px;width:181px;text-align:center;font-size:10.3px;font-weight:bold;color:#fdf8ee">Product Name</div>
<div style="left:240px;top:408px;width:2px;height:28px;background:#d8d2cc"></div>
<div class="t" style="left:241px;top:417px;width:119px;text-align:center;font-size:10.3px;font-weight:bold;color:#fdf8ee">Selling Price (€)</div>
<div style="left:359px;top:408px;width:2px;height:28px;background:#d8d2cc"></div>
<div class="t" style="left:360px;top:417px;width:119px;text-align:center;font-size:10.3px;font-weight:bold;color:#fdf8ee">Product Cost (€)</div>
<div style="left:478px;top:408px;width:2px;height:28px;background:#d8d2cc"></div>
<div class="t" style="left:479px;top:417px;width:112px;text-align:center;font-size:10.3px;font-weight:bold;color:#fdf8ee">Ads Cost/unit (€)</div>
<div style="left:590px;top:408px;width:2px;height:28px;background:#d8d2cc"></div>
<div class="t" style="left:591px;top:417px;width:105px;text-align:center;font-size:10.3px;font-weight:bold;color:#fdf8ee">Gross Margin (€)</div>
<div style="left:695px;top:408px;width:2px;height:28px;background:#d8d2cc"></div>
<div class="t" style="left:696px;top:417px;width:84px;text-align:center;font-size:10.3px;font-weight:bold;color:#fdf8ee">Margin %</div>
<div style="left:779px;top:408px;width:2px;height:28px;background:#d8d2cc"></div>
<div class="t" style="left:780px;top:417px;width:91px;text-align:center;font-size:10.3px;font-weight:bold;color:#fdf8ee">Units Sold</div>
<div style="left:870px;top:408px;width:2px;height:28px;background:#d8d2cc"></div>
<div class="t" style="left:871px;top:417px;width:126px;text-align:center;font-size:10.3px;font-weight:bold;color:#fdf8ee">Total Revenue (€)</div>
<div style="left:996px;top:408px;width:2px;height:28px;background:#d8d2cc"></div>
<div class="t" style="left:997px;top:417px;width:126px;text-align:center;font-size:10.3px;font-weight:bold;color:#fdf8ee">Total Profit (€)</div>
<div style="left:1122px;top:408px;width:2px;height:28px;background:#d8d2cc"></div>
<div class="t" style="left:1123px;top:417px;width:154px;text-align:center;font-size:10.3px;font-weight:bold;color:#fdf8ee">Notes</div>
<div style="left:1276px;top:408px;width:2px;height:28px;background:#d8d2cc"></div>
<div style="left:59px;top:441px;width:1219px;height:24px;background:#d8d2cc"></div>
<div style="left:60px;top:441px;width:180px;height:22px;background:#f0ece7"></div>
<div style="left:242px;top:441px;width:117px;height:22px;background:#d7e7f0"></div>
<div style="left:361px;top:441px;width:117px;height:22px;background:#d7e7f0"></div>
<div style="left:480px;top:441px;width:110px;height:22px;background:#d7e7f0"></div>
<div style="left:592px;top:441px;width:104px;height:23px;background:#d5e8dc"></div>
<div style="left:697px;top:441px;width:83px;height:23px;background:#f0ece7"></div>
<div style="left:781px;top:441px;width:89px;height:22px;background:#d7e7f0"></div>
<div style="left:872px;top:441px;width:125px;height:23px;background:#d5e8dc"></div>
<div style="left:998px;top:441px;width:125px;height:23px;background:#d5e8dc"></div>
<div style="left:1124px;top:441px;width:153px;height:23px;background:#f0ece7"></div>
<div style="left:240px;top:441px;width:1px;height:24px;background:#d8d2cc"></div>
<div style="left:779px;top:441px;width:1px;height:24px;background:#d8d2cc"></div>
<div class="t" style="left:63px;top:446px;font-size:11.9px;color:#000;-webkit-text-stroke:0.1px #000">NeuroVivo 90-Day Program PDF</div>
<div class="t" style="left:241px;top:446px;width:116px;text-align:right;font-size:12.4px;letter-spacing:0.7px;font-weight:bold;color:#0f68c4">29,00 €</div>
<div class="t" style="left:479px;top:446px;width:109px;text-align:right;font-size:12.4px;letter-spacing:0.7px;font-weight:bold;color:#0f68c4">8,20 €</div>
<div class="t" style="left:591px;top:446px;width:102px;text-align:right;font-size:12.4px;letter-spacing:0.5px;color:#4a7c59;-webkit-text-stroke:0.3px #4a7c59">20,80 €</div>
<div class="t" style="left:696px;top:447px;width:84px;text-align:center;font-size:11.2px;color:#111;-webkit-text-stroke:0.2px #111">71,7%</div>
<div class="t" style="left:780px;top:446px;width:88px;text-align:right;font-size:12.4px;letter-spacing:0.7px;font-weight:bold;color:#0f68c4">487</div>
<div class="t" style="left:871px;top:446px;width:123px;text-align:right;font-size:12.4px;letter-spacing:0.5px;color:#4a7c59;-webkit-text-stroke:0.3px #4a7c59">14.123,00 €</div>
<div class="t" style="left:997px;top:446px;width:123px;text-align:right;font-size:12.4px;letter-spacing:0.5px;color:#4a7c59;-webkit-text-stroke:0.3px #4a7c59">10.129,60 €</div>
<div style="left:59px;top:465px;width:1219px;height:24px;background:#d8d2cc"></div>
<div style="left:60px;top:465px;width:180px;height:22px;background:#fff"></div>
<div style="left:242px;top:465px;width:117px;height:22px;background:#d7e7f0"></div>
<div style="left:361px;top:465px;width:117px;height:22px;background:#d7e7f0"></div>
<div style="left:480px;top:465px;width:110px;height:22px;background:#d7e7f0"></div>
<div style="left:592px;top:465px;width:104px;height:23px;background:#d5e8dc"></div>
<div style="left:697px;top:465px;width:83px;height:23px;background:#fff"></div>
<div style="left:781px;top:465px;width:89px;height:22px;background:#d7e7f0"></div>
<div style="left:872px;top:465px;width:125px;height:23px;background:#d5e8dc"></div>
<div style="left:998px;top:465px;width:125px;height:23px;background:#d5e8dc"></div>
<div style="left:1124px;top:465px;width:153px;height:23px;background:#fff"></div>
<div style="left:240px;top:465px;width:1px;height:24px;background:#d8d2cc"></div>
<div style="left:779px;top:465px;width:1px;height:24px;background:#d8d2cc"></div>
<div class="t" style="left:63px;top:470px;font-size:11.9px;color:#000;-webkit-text-stroke:0.1px #000">Memory Boost Masterclass</div>
<div class="t" style="left:241px;top:470px;width:116px;text-align:right;font-size:12.4px;letter-spacing:0.7px;font-weight:bold;color:#0f68c4">47,00 €</div>
<div class="t" style="left:479px;top:470px;width:109px;text-align:right;font-size:12.4px;letter-spacing:0.7px;font-weight:bold;color:#0f68c4">11,40 €</div>
<div class="t" style="left:591px;top:470px;width:102px;text-align:right;font-size:12.4px;letter-spacing:0.5px;color:#4a7c59;-webkit-text-stroke:0.3px #4a7c59">35,60 €</div>
<div class="t" style="left:696px;top:471px;width:84px;text-align:center;font-size:11.2px;color:#111;-webkit-text-stroke:0.2px #111">75,7%</div>
<div class="t" style="left:780px;top:470px;width:88px;text-align:right;font-size:12.4px;letter-spacing:0.7px;font-weight:bold;color:#0f68c4">218</div>
<div class="t" style="left:871px;top:470px;width:123px;text-align:right;font-size:12.4px;letter-spacing:0.5px;color:#4a7c59;-webkit-text-stroke:0.3px #4a7c59">10.246,00 €</div>
<div class="t" style="left:997px;top:470px;width:123px;text-align:right;font-size:12.4px;letter-spacing:0.5px;color:#4a7c59;-webkit-text-stroke:0.3px #4a7c59">7.760,80 €</div>
<div style="left:59px;top:489px;width:1219px;height:24px;background:#d8d2cc"></div>
<div style="left:60px;top:489px;width:180px;height:22px;background:#f0ece7"></div>
<div style="left:242px;top:489px;width:117px;height:22px;background:#d7e7f0"></div>
<div style="left:361px;top:489px;width:117px;height:22px;background:#d7e7f0"></div>
<div style="left:480px;top:489px;width:110px;height:22px;background:#d7e7f0"></div>
<div style="left:592px;top:489px;width:104px;height:23px;background:#d5e8dc"></div>
<div style="left:697px;top:489px;width:83px;height:23px;background:#f0ece7"></div>
<div style="left:781px;top:489px;width:89px;height:22px;background:#d7e7f0"></div>
<div style="left:872px;top:489px;width:125px;height:23px;background:#d5e8dc"></div>
<div style="left:998px;top:489px;width:125px;height:23px;background:#d5e8dc"></div>
<div style="left:1124px;top:489px;width:153px;height:23px;background:#f0ece7"></div>
<div style="left:240px;top:489px;width:1px;height:24px;background:#d8d2cc"></div>
<div style="left:779px;top:489px;width:1px;height:24px;background:#d8d2cc"></div>
<div class="t" style="left:63px;top:494px;font-size:11.9px;color:#000;-webkit-text-stroke:0.1px #000">Brain Fog Reset Kit</div>
<div class="t" style="left:241px;top:494px;width:116px;text-align:right;font-size:12.4px;letter-spacing:0.7px;font-weight:bold;color:#0f68c4">37,00 €</div>
<div class="t" style="left:479px;top:494px;width:109px;text-align:right;font-size:12.4px;letter-spacing:0.7px;font-weight:bold;color:#0f68c4">9,80 €</div>
<div class="t" style="left:591px;top:494px;width:102px;text-align:right;font-size:12.4px;letter-spacing:0.5px;color:#4a7c59;-webkit-text-stroke:0.3px #4a7c59">27,20 €</div>
<div class="t" style="left:696px;top:495px;width:84px;text-align:center;font-size:11.2px;color:#111;-webkit-text-stroke:0.2px #111">73,5%</div>
<div class="t" style="left:780px;top:494px;width:88px;text-align:right;font-size:12.4px;letter-spacing:0.7px;font-weight:bold;color:#0f68c4">194</div>
<div class="t" style="left:871px;top:494px;width:123px;text-align:right;font-size:12.4px;letter-spacing:0.5px;color:#4a7c59;-webkit-text-stroke:0.3px #4a7c59">7.178,00 €</div>
<div class="t" style="left:997px;top:494px;width:123px;text-align:right;font-size:12.4px;letter-spacing:0.5px;color:#4a7c59;-webkit-text-stroke:0.3px #4a7c59">5.276,80 €</div>
<div style="left:59px;top:513px;width:1219px;height:24px;background:#d8d2cc"></div>
<div style="left:60px;top:513px;width:180px;height:22px;background:#fff"></div>
<div style="left:242px;top:513px;width:117px;height:22px;background:#d7e7f0"></div>
<div style="left:361px;top:513px;width:117px;height:22px;background:#d7e7f0"></div>
<div style="left:480px;top:513px;width:110px;height:22px;background:#d7e7f0"></div>
<div style="left:592px;top:513px;width:104px;height:23px;background:#d5e8dc"></div>
<div style="left:697px;top:513px;width:83px;height:23px;background:#fff"></div>
<div style="left:781px;top:513px;width:89px;height:22px;background:#d7e7f0"></div>
<div style="left:872px;top:513px;width:125px;height:23px;background:#d5e8dc"></div>
<div style="left:998px;top:513px;width:125px;height:23px;background:#d5e8dc"></div>
<div style="left:1124px;top:513px;width:153px;height:23px;background:#fff"></div>
<div style="left:240px;top:513px;width:1px;height:24px;background:#d8d2cc"></div>
<div style="left:779px;top:513px;width:1px;height:24px;background:#d8d2cc"></div>
<div class="t" style="left:63px;top:518px;font-size:11.9px;color:#000;-webkit-text-stroke:0.1px #000">Focus Elite Bundle</div>
<div class="t" style="left:241px;top:518px;width:116px;text-align:right;font-size:12.4px;letter-spacing:0.7px;font-weight:bold;color:#0f68c4">39,00 €</div>
<div class="t" style="left:479px;top:518px;width:109px;text-align:right;font-size:12.4px;letter-spacing:0.7px;font-weight:bold;color:#0f68c4">10,20 €</div>
<div class="t" style="left:591px;top:518px;width:102px;text-align:right;font-size:12.4px;letter-spacing:0.5px;color:#4a7c59;-webkit-text-stroke:0.3px #4a7c59">28,80 €</div>
<div class="t" style="left:696px;top:519px;width:84px;text-align:center;font-size:11.2px;color:#111;-webkit-text-stroke:0.2px #111">73,8%</div>
<div class="t" style="left:780px;top:518px;width:88px;text-align:right;font-size:12.4px;letter-spacing:0.7px;font-weight:bold;color:#0f68c4">176</div>
<div class="t" style="left:871px;top:518px;width:123px;text-align:right;font-size:12.4px;letter-spacing:0.5px;color:#4a7c59;-webkit-text-stroke:0.3px #4a7c59">6.864,00 €</div>
<div class="t" style="left:997px;top:518px;width:123px;text-align:right;font-size:12.4px;letter-spacing:0.5px;color:#4a7c59;-webkit-text-stroke:0.3px #4a7c59">5.068,80 €</div>
<div style="left:59px;top:537px;width:1219px;height:24px;background:#d8d2cc"></div>
<div style="left:60px;top:537px;width:180px;height:22px;background:#f0ece7"></div>
<div style="left:242px;top:537px;width:117px;height:22px;background:#d7e7f0"></div>
<div style="left:361px;top:537px;width:117px;height:22px;background:#d7e7f0"></div>
<div style="left:480px;top:537px;width:110px;height:22px;background:#d7e7f0"></div>
<div style="left:592px;top:537px;width:104px;height:23px;background:#d5e8dc"></div>
<div style="left:697px;top:537px;width:83px;height:23px;background:#f0ece7"></div>
<div style="left:781px;top:537px;width:89px;height:22px;background:#d7e7f0"></div>
<div style="left:872px;top:537px;width:125px;height:23px;background:#d5e8dc"></div>
<div style="left:998px;top:537px;width:125px;height:23px;background:#d5e8dc"></div>
<div style="left:1124px;top:537px;width:153px;height:23px;background:#f0ece7"></div>
<div style="left:240px;top:537px;width:1px;height:24px;background:#d8d2cc"></div>
<div style="left:779px;top:537px;width:1px;height:24px;background:#d8d2cc"></div>
<div class="t" style="left:63px;top:542px;font-size:11.9px;color:#000;-webkit-text-stroke:0.1px #000">Cognitive Calendar Planner 2025</div>
<div class="t" style="left:241px;top:542px;width:116px;text-align:right;font-size:12.4px;letter-spacing:0.7px;font-weight:bold;color:#0f68c4">19,00 €</div>
<div class="t" style="left:479px;top:542px;width:109px;text-align:right;font-size:12.4px;letter-spacing:0.7px;font-weight:bold;color:#0f68c4">5,40 €</div>
<div class="t" style="left:591px;top:542px;width:102px;text-align:right;font-size:12.4px;letter-spacing:0.5px;color:#4a7c59;-webkit-text-stroke:0.3px #4a7c59">13,60 €</div>
<div class="t" style="left:696px;top:543px;width:84px;text-align:center;font-size:11.2px;color:#111;-webkit-text-stroke:0.2px #111">71,6%</div>
<div class="t" style="left:780px;top:542px;width:88px;text-align:right;font-size:12.4px;letter-spacing:0.7px;font-weight:bold;color:#0f68c4">312</div>
<div class="t" style="left:871px;top:542px;width:123px;text-align:right;font-size:12.4px;letter-spacing:0.5px;color:#4a7c59;-webkit-text-stroke:0.3px #4a7c59">5.928,00 €</div>
<div class="t" style="left:997px;top:542px;width:123px;text-align:right;font-size:12.4px;letter-spacing:0.5px;color:#4a7c59;-webkit-text-stroke:0.3px #4a7c59">4.243,20 €</div>
<div style="left:59px;top:561px;width:1219px;height:24px;background:#d8d2cc"></div>
<div style="left:60px;top:561px;width:180px;height:22px;background:#fff"></div>
<div style="left:242px;top:561px;width:117px;height:22px;background:#d7e7f0"></div>
<div style="left:361px;top:561px;width:117px;height:22px;background:#d7e7f0"></div>
<div style="left:480px;top:561px;width:110px;height:22px;background:#d7e7f0"></div>
<div style="left:592px;top:561px;width:104px;height:23px;background:#d5e8dc"></div>
<div style="left:697px;top:561px;width:83px;height:23px;background:#fff"></div>
<div style="left:781px;top:561px;width:89px;height:22px;background:#d7e7f0"></div>
<div style="left:872px;top:561px;width:125px;height:23px;background:#d5e8dc"></div>
<div style="left:998px;top:561px;width:125px;height:23px;background:#d5e8dc"></div>
<div style="left:1124px;top:561px;width:153px;height:23px;background:#fff"></div>
<div style="left:240px;top:561px;width:1px;height:24px;background:#d8d2cc"></div>
<div style="left:779px;top:561px;width:1px;height:24px;background:#d8d2cc"></div>
<div class="t" style="left:63px;top:566px;font-size:11.9px;color:#000;-webkit-text-stroke:0.1px #000">NeuroVivo PRO Edition</div>
<div class="t" style="left:241px;top:566px;width:116px;text-align:right;font-size:12.4px;letter-spacing:0.7px;font-weight:bold;color:#0f68c4">67,00 €</div>
<div class="t" style="left:479px;top:566px;width:109px;text-align:right;font-size:12.4px;letter-spacing:0.7px;font-weight:bold;color:#0f68c4">14,60 €</div>
<div class="t" style="left:591px;top:566px;width:102px;text-align:right;font-size:12.4px;letter-spacing:0.5px;color:#4a7c59;-webkit-text-stroke:0.3px #4a7c59">52,40 €</div>
<div class="t" style="left:696px;top:567px;width:84px;text-align:center;font-size:11.2px;color:#111;-webkit-text-stroke:0.2px #111">78,2%</div>
<div class="t" style="left:780px;top:566px;width:88px;text-align:right;font-size:12.4px;letter-spacing:0.7px;font-weight:bold;color:#0f68c4">89</div>
<div class="t" style="left:871px;top:566px;width:123px;text-align:right;font-size:12.4px;letter-spacing:0.5px;color:#4a7c59;-webkit-text-stroke:0.3px #4a7c59">5.963,00 €</div>
<div class="t" style="left:997px;top:566px;width:123px;text-align:right;font-size:12.4px;letter-spacing:0.5px;color:#4a7c59;-webkit-text-stroke:0.3px #4a7c59">4.663,60 €</div>
<div style="left:59px;top:585px;width:1219px;height:24px;background:#d8d2cc"></div>
<div style="left:60px;top:585px;width:180px;height:22px;background:#f0ece7"></div>
<div style="left:242px;top:585px;width:117px;height:22px;background:#d7e7f0"></div>
<div style="left:361px;top:585px;width:117px;height:22px;background:#d7e7f0"></div>
<div style="left:480px;top:585px;width:110px;height:22px;background:#d7e7f0"></div>
<div style="left:592px;top:585px;width:104px;height:23px;background:#d5e8dc"></div>
<div style="left:697px;top:585px;width:83px;height:23px;background:#f0ece7"></div>
<div style="left:781px;top:585px;width:89px;height:22px;background:#d7e7f0"></div>
<div style="left:872px;top:585px;width:125px;height:23px;background:#d5e8dc"></div>
<div style="left:998px;top:585px;width:125px;height:23px;background:#d5e8dc"></div>
<div style="left:1124px;top:585px;width:153px;height:23px;background:#f0ece7"></div>
<div style="left:240px;top:585px;width:1px;height:24px;background:#d8d2cc"></div>
<div style="left:779px;top:585px;width:1px;height:24px;background:#d8d2cc"></div>
<div class="t" style="left:63px;top:590px;font-size:11.9px;color:#000;-webkit-text-stroke:0.1px #000">Morning Ritual Mastery Guide</div>
<div class="t" style="left:241px;top:590px;width:116px;text-align:right;font-size:12.4px;letter-spacing:0.7px;font-weight:bold;color:#0f68c4">24,00 €</div>
<div class="t" style="left:479px;top:590px;width:109px;text-align:right;font-size:12.4px;letter-spacing:0.7px;font-weight:bold;color:#0f68c4">6,80 €</div>
<div class="t" style="left:591px;top:590px;width:102px;text-align:right;font-size:12.4px;letter-spacing:0.5px;color:#4a7c59;-webkit-text-stroke:0.3px #4a7c59">17,20 €</div>
<div class="t" style="left:696px;top:591px;width:84px;text-align:center;font-size:11.2px;color:#111;-webkit-text-stroke:0.2px #111">71,7%</div>
<div class="t" style="left:780px;top:590px;width:88px;text-align:right;font-size:12.4px;letter-spacing:0.7px;font-weight:bold;color:#0f68c4">143</div>
<div class="t" style="left:871px;top:590px;width:123px;text-align:right;font-size:12.4px;letter-spacing:0.5px;color:#4a7c59;-webkit-text-stroke:0.3px #4a7c59">3.432,00 €</div>
<div class="t" style="left:997px;top:590px;width:123px;text-align:right;font-size:12.4px;letter-spacing:0.5px;color:#4a7c59;-webkit-text-stroke:0.3px #4a7c59">2.459,60 €</div>
<div style="left:59px;top:609px;width:1219px;height:24px;background:#d8d2cc"></div>
<div style="left:60px;top:609px;width:180px;height:22px;background:#fff"></div>
<div style="left:242px;top:609px;width:117px;height:22px;background:#d7e7f0"></div>
<div style="left:361px;top:609px;width:117px;height:22px;background:#d7e7f0"></div>
<div style="left:480px;top:609px;width:110px;height:22px;background:#d7e7f0"></div>
<div style="left:592px;top:609px;width:104px;height:23px;background:#d5e8dc"></div>
<div style="left:697px;top:609px;width:83px;height:23px;background:#fff"></div>
<div style="left:781px;top:609px;width:89px;height:22px;background:#d7e7f0"></div>
<div style="left:872px;top:609px;width:125px;height:23px;background:#d5e8dc"></div>
<div style="left:998px;top:609px;width:125px;height:23px;background:#d5e8dc"></div>
<div style="left:1124px;top:609px;width:153px;height:23px;background:#fff"></div>
<div style="left:240px;top:609px;width:1px;height:24px;background:#d8d2cc"></div>
<div style="left:779px;top:609px;width:1px;height:24px;background:#d8d2cc"></div>
<div class="t" style="left:63px;top:614px;font-size:11.9px;color:#000;-webkit-text-stroke:0.1px #000">Mental Clarity 30-Day Workbook</div>
<div class="t" style="left:241px;top:614px;width:116px;text-align:right;font-size:12.4px;letter-spacing:0.7px;font-weight:bold;color:#0f68c4">29,00 €</div>
<div class="t" style="left:479px;top:614px;width:109px;text-align:right;font-size:12.4px;letter-spacing:0.7px;font-weight:bold;color:#0f68c4">7,90 €</div>
<div class="t" style="left:591px;top:614px;width:102px;text-align:right;font-size:12.4px;letter-spacing:0.5px;color:#4a7c59;-webkit-text-stroke:0.3px #4a7c59">21,10 €</div>
<div class="t" style="left:696px;top:615px;width:84px;text-align:center;font-size:11.2px;color:#111;-webkit-text-stroke:0.2px #111">72,8%</div>
<div class="t" style="left:780px;top:614px;width:88px;text-align:right;font-size:12.4px;letter-spacing:0.7px;font-weight:bold;color:#0f68c4">164</div>
<div class="t" style="left:871px;top:614px;width:123px;text-align:right;font-size:12.4px;letter-spacing:0.5px;color:#4a7c59;-webkit-text-stroke:0.3px #4a7c59">4.756,00 €</div>
<div class="t" style="left:997px;top:614px;width:123px;text-align:right;font-size:12.4px;letter-spacing:0.5px;color:#4a7c59;-webkit-text-stroke:0.3px #4a7c59">3.460,40 €</div>
<div style="left:59px;top:633px;width:1219px;height:24px;background:#d8d2cc"></div>
<div style="left:60px;top:633px;width:180px;height:22px;background:#f0ece7"></div>
<div style="left:242px;top:633px;width:117px;height:22px;background:#d7e7f0"></div>
<div style="left:361px;top:633px;width:117px;height:22px;background:#d7e7f0"></div>
<div style="left:480px;top:633px;width:110px;height:22px;background:#d7e7f0"></div>
<div style="left:592px;top:633px;width:104px;height:23px;background:#d5e8dc"></div>
<div style="left:697px;top:633px;width:83px;height:23px;background:#f0ece7"></div>
<div style="left:781px;top:633px;width:89px;height:22px;background:#d7e7f0"></div>
<div style="left:872px;top:633px;width:125px;height:23px;background:#d5e8dc"></div>
<div style="left:998px;top:633px;width:125px;height:23px;background:#d5e8dc"></div>
<div style="left:1124px;top:633px;width:153px;height:23px;background:#f0ece7"></div>
<div style="left:240px;top:633px;width:1px;height:24px;background:#d8d2cc"></div>
<div style="left:779px;top:633px;width:1px;height:24px;background:#d8d2cc"></div>
<div class="t" style="left:63px;top:638px;font-size:11.9px;color:#000;-webkit-text-stroke:0.1px #000">Sleep &amp; Cognition Protocol</div>
<div class="t" style="left:241px;top:638px;width:116px;text-align:right;font-size:12.4px;letter-spacing:0.7px;font-weight:bold;color:#0f68c4">34,00 €</div>
<div class="t" style="left:479px;top:638px;width:109px;text-align:right;font-size:12.4px;letter-spacing:0.7px;font-weight:bold;color:#0f68c4">9,10 €</div>
<div class="t" style="left:591px;top:638px;width:102px;text-align:right;font-size:12.4px;letter-spacing:0.5px;color:#4a7c59;-webkit-text-stroke:0.3px #4a7c59">24,90 €</div>
<div class="t" style="left:696px;top:639px;width:84px;text-align:center;font-size:11.2px;color:#111;-webkit-text-stroke:0.2px #111">73,2%</div>
<div class="t" style="left:780px;top:638px;width:88px;text-align:right;font-size:12.4px;letter-spacing:0.7px;font-weight:bold;color:#0f68c4">112</div>
<div class="t" style="left:871px;top:638px;width:123px;text-align:right;font-size:12.4px;letter-spacing:0.5px;color:#4a7c59;-webkit-text-stroke:0.3px #4a7c59">3.808,00 €</div>
<div class="t" style="left:997px;top:638px;width:123px;text-align:right;font-size:12.4px;letter-spacing:0.5px;color:#4a7c59;-webkit-text-stroke:0.3px #4a7c59">2.788,80 €</div>
<div style="left:59px;top:657px;width:1219px;height:24px;background:#d8d2cc"></div>
<div style="left:60px;top:657px;width:180px;height:22px;background:#fff"></div>
<div style="left:242px;top:657px;width:117px;height:22px;background:#d7e7f0"></div>
<div style="left:361px;top:657px;width:117px;height:22px;background:#d7e7f0"></div>
<div style="left:480px;top:657px;width:110px;height:22px;background:#d7e7f0"></div>
<div style="left:592px;top:657px;width:104px;height:23px;background:#d5e8dc"></div>
<div style="left:697px;top:657px;width:83px;height:23px;background:#fff"></div>
<div style="left:781px;top:657px;width:89px;height:22px;background:#d7e7f0"></div>
<div style="left:872px;top:657px;width:125px;height:23px;background:#d5e8dc"></div>
<div style="left:998px;top:657px;width:125px;height:23px;background:#d5e8dc"></div>
<div style="left:1124px;top:657px;width:153px;height:23px;background:#fff"></div>
<div style="left:240px;top:657px;width:1px;height:24px;background:#d8d2cc"></div>
<div style="left:779px;top:657px;width:1px;height:24px;background:#d8d2cc"></div>
<div class="t" style="left:63px;top:662px;font-size:11.9px;color:#000;-webkit-text-stroke:0.1px #000">Anti-Brain Fog Protocol</div>
<div class="t" style="left:241px;top:662px;width:116px;text-align:right;font-size:12.4px;letter-spacing:0.7px;font-weight:bold;color:#0f68c4">45,00 €</div>
<div class="t" style="left:479px;top:662px;width:109px;text-align:right;font-size:12.4px;letter-spacing:0.7px;font-weight:bold;color:#0f68c4">11,80 €</div>
<div class="t" style="left:591px;top:662px;width:102px;text-align:right;font-size:12.4px;letter-spacing:0.5px;color:#4a7c59;-webkit-text-stroke:0.3px #4a7c59">33,20 €</div>
<div class="t" style="left:696px;top:663px;width:84px;text-align:center;font-size:11.2px;color:#111;-webkit-text-stroke:0.2px #111">73,8%</div>
<div class="t" style="left:780px;top:662px;width:88px;text-align:right;font-size:12.4px;letter-spacing:0.7px;font-weight:bold;color:#0f68c4">98</div>
<div class="t" style="left:871px;top:662px;width:123px;text-align:right;font-size:12.4px;letter-spacing:0.5px;color:#4a7c59;-webkit-text-stroke:0.3px #4a7c59">4.410,00 €</div>
<div class="t" style="left:997px;top:662px;width:123px;text-align:right;font-size:12.4px;letter-spacing:0.5px;color:#4a7c59;-webkit-text-stroke:0.3px #4a7c59">3.253,60 €</div>
<div style="left:59px;top:681px;width:1219px;height:24px;background:#d8d2cc"></div>
<div style="left:60px;top:681px;width:180px;height:22px;background:#f0ece7"></div>
<div style="left:242px;top:681px;width:117px;height:22px;background:#d7e7f0"></div>
<div style="left:361px;top:681px;width:117px;height:22px;background:#d7e7f0"></div>
<div style="left:480px;top:681px;width:110px;height:22px;background:#d7e7f0"></div>
<div style="left:592px;top:681px;width:104px;height:23px;background:#d5e8dc"></div>
<div style="left:697px;top:681px;width:83px;height:23px;background:#f0ece7"></div>
<div style="left:781px;top:681px;width:89px;height:22px;background:#d7e7f0"></div>
<div style="left:872px;top:681px;width:125px;height:23px;background:#d5e8dc"></div>
<div style="left:998px;top:681px;width:125px;height:23px;background:#d5e8dc"></div>
<div style="left:1124px;top:681px;width:153px;height:23px;background:#f0ece7"></div>
<div style="left:240px;top:681px;width:1px;height:24px;background:#d8d2cc"></div>
<div style="left:779px;top:681px;width:1px;height:24px;background:#d8d2cc"></div>
<div class="t" style="left:63px;top:686px;font-size:11.9px;color:#000;-webkit-text-stroke:0.1px #000">Productivity PDF Mega Bundle</div>
<div class="t" style="left:241px;top:686px;width:116px;text-align:right;font-size:12.4px;letter-spacing:0.7px;font-weight:bold;color:#0f68c4">49,00 €</div>
<div class="t" style="left:479px;top:686px;width:109px;text-align:right;font-size:12.4px;letter-spacing:0.7px;font-weight:bold;color:#0f68c4">12,40 €</div>
<div class="t" style="left:591px;top:686px;width:102px;text-align:right;font-size:12.4px;letter-spacing:0.5px;color:#4a7c59;-webkit-text-stroke:0.3px #4a7c59">36,60 €</div>
<div class="t" style="left:696px;top:687px;width:84px;text-align:center;font-size:11.2px;color:#111;-webkit-text-stroke:0.2px #111">74,7%</div>
<div class="t" style="left:780px;top:686px;width:88px;text-align:right;font-size:12.4px;letter-spacing:0.7px;font-weight:bold;color:#0f68c4">74</div>
<div class="t" style="left:871px;top:686px;width:123px;text-align:right;font-size:12.4px;letter-spacing:0.5px;color:#4a7c59;-webkit-text-stroke:0.3px #4a7c59">3.626,00 €</div>
<div class="t" style="left:997px;top:686px;width:123px;text-align:right;font-size:12.4px;letter-spacing:0.5px;color:#4a7c59;-webkit-text-stroke:0.3px #4a7c59">2.708,40 €</div>
<div style="left:59px;top:705px;width:1219px;height:24px;background:#d8d2cc"></div>
<div style="left:60px;top:705px;width:180px;height:22px;background:#fff"></div>
<div style="left:242px;top:705px;width:117px;height:22px;background:#d7e7f0"></div>
<div style="left:361px;top:705px;width:117px;height:22px;background:#d7e7f0"></div>
<div style="left:480px;top:705px;width:110px;height:22px;background:#d7e7f0"></div>
<div style="left:592px;top:705px;width:104px;height:23px;background:#d5e8dc"></div>
<div style="left:697px;top:705px;width:83px;height:23px;background:#fff"></div>
<div style="left:781px;top:705px;width:89px;height:22px;background:#d7e7f0"></div>
<div style="left:872px;top:705px;width:125px;height:23px;background:#d5e8dc"></div>
<div style="left:998px;top:705px;width:125px;height:23px;background:#d5e8dc"></div>
<div style="left:1124px;top:705px;width:153px;height:23px;background:#fff"></div>
<div style="left:240px;top:705px;width:1px;height:24px;background:#d8d2cc"></div>
<div style="left:779px;top:705px;width:1px;height:24px;background:#d8d2cc"></div>
<div class="t" style="left:63px;top:710px;font-size:11.9px;color:#000;-webkit-text-stroke:0.1px #000">Focus Music + Guide PDF</div>
<div class="t" style="left:241px;top:710px;width:116px;text-align:right;font-size:12.4px;letter-spacing:0.7px;font-weight:bold;color:#0f68c4">12,00 €</div>
<div class="t" style="left:479px;top:710px;width:109px;text-align:right;font-size:12.4px;letter-spacing:0.7px;font-weight:bold;color:#0f68c4">3,20 €</div>
<div class="t" style="left:591px;top:710px;width:102px;text-align:right;font-size:12.4px;letter-spacing:0.5px;color:#4a7c59;-webkit-text-stroke:0.3px #4a7c59">8,80 €</div>
<div class="t" style="left:696px;top:711px;width:84px;text-align:center;font-size:11.2px;color:#111;-webkit-text-stroke:0.2px #111">73,3%</div>
<div class="t" style="left:780px;top:710px;width:88px;text-align:right;font-size:12.4px;letter-spacing:0.7px;font-weight:bold;color:#0f68c4">289</div>
<div class="t" style="left:871px;top:710px;width:123px;text-align:right;font-size:12.4px;letter-spacing:0.5px;color:#4a7c59;-webkit-text-stroke:0.3px #4a7c59">3.468,00 €</div>
<div class="t" style="left:997px;top:710px;width:123px;text-align:right;font-size:12.4px;letter-spacing:0.5px;color:#4a7c59;-webkit-text-stroke:0.3px #4a7c59">2.543,20 €</div>
<div style="left:59px;top:729px;width:1219px;height:24px;background:#d8d2cc"></div>
<div style="left:60px;top:729px;width:180px;height:22px;background:#f0ece7"></div>
<div style="left:242px;top:729px;width:117px;height:22px;background:#d7e7f0"></div>
<div style="left:361px;top:729px;width:117px;height:22px;background:#d7e7f0"></div>
<div style="left:480px;top:729px;width:110px;height:22px;background:#d7e7f0"></div>
<div style="left:592px;top:729px;width:104px;height:23px;background:#d5e8dc"></div>
<div style="left:697px;top:729px;width:83px;height:23px;background:#f0ece7"></div>
<div style="left:781px;top:729px;width:89px;height:22px;background:#d7e7f0"></div>
<div style="left:872px;top:729px;width:125px;height:23px;background:#d5e8dc"></div>
<div style="left:998px;top:729px;width:125px;height:23px;background:#d5e8dc"></div>
<div style="left:1124px;top:729px;width:153px;height:23px;background:#f0ece7"></div>
<div style="left:240px;top:729px;width:1px;height:24px;background:#d8d2cc"></div>
<div style="left:779px;top:729px;width:1px;height:24px;background:#d8d2cc"></div>
<div class="t" style="left:63px;top:734px;font-size:11.9px;color:#000;-webkit-text-stroke:0.1px #000">Wellness Supplement Pack</div>
<div class="t" style="left:241px;top:734px;width:116px;text-align:right;font-size:12.4px;letter-spacing:0.7px;font-weight:bold;color:#0f68c4">38,00 €</div>
<div class="t" style="left:360px;top:734px;width:116px;text-align:right;font-size:12.4px;letter-spacing:0.7px;font-weight:bold;color:#0f68c4">14,20 €</div>
<div class="t" style="left:479px;top:734px;width:109px;text-align:right;font-size:12.4px;letter-spacing:0.7px;font-weight:bold;color:#0f68c4">9,80 €</div>
<div class="t" style="left:591px;top:734px;width:102px;text-align:right;font-size:12.4px;letter-spacing:0.5px;color:#4a7c59;-webkit-text-stroke:0.3px #4a7c59">14,00 €</div>
<div class="t" style="left:696px;top:735px;width:84px;text-align:center;font-size:11.2px;color:#111;-webkit-text-stroke:0.2px #111">36,8%</div>
<div class="t" style="left:780px;top:734px;width:88px;text-align:right;font-size:12.4px;letter-spacing:0.7px;font-weight:bold;color:#0f68c4">241</div>
<div class="t" style="left:871px;top:734px;width:123px;text-align:right;font-size:12.4px;letter-spacing:0.5px;color:#4a7c59;-webkit-text-stroke:0.3px #4a7c59">9.158,00 €</div>
<div class="t" style="left:997px;top:734px;width:123px;text-align:right;font-size:12.4px;letter-spacing:0.5px;color:#4a7c59;-webkit-text-stroke:0.3px #4a7c59">3.374,00 €</div>
<div style="left:59px;top:753px;width:1219px;height:24px;background:#d8d2cc"></div>
<div style="left:60px;top:753px;width:180px;height:22px;background:#fff"></div>
<div style="left:242px;top:753px;width:117px;height:22px;background:#d7e7f0"></div>
<div style="left:361px;top:753px;width:117px;height:22px;background:#d7e7f0"></div>
<div style="left:480px;top:753px;width:110px;height:22px;background:#d7e7f0"></div>
<div style="left:592px;top:753px;width:104px;height:23px;background:#d5e8dc"></div>
<div style="left:697px;top:753px;width:83px;height:23px;background:#fff"></div>
<div style="left:781px;top:753px;width:89px;height:22px;background:#d7e7f0"></div>
<div style="left:872px;top:753px;width:125px;height:23px;background:#d5e8dc"></div>
<div style="left:998px;top:753px;width:125px;height:23px;background:#d5e8dc"></div>
<div style="left:1124px;top:753px;width:153px;height:23px;background:#fff"></div>
<div style="left:240px;top:753px;width:1px;height:24px;background:#d8d2cc"></div>
<div style="left:779px;top:753px;width:1px;height:24px;background:#d8d2cc"></div>
<div class="t" style="left:63px;top:758px;font-size:11.9px;color:#000;-webkit-text-stroke:0.1px #000">Brain Power Capsules 90ct</div>
<div class="t" style="left:241px;top:758px;width:116px;text-align:right;font-size:12.4px;letter-spacing:0.7px;font-weight:bold;color:#0f68c4">44,00 €</div>
<div class="t" style="left:360px;top:758px;width:116px;text-align:right;font-size:12.4px;letter-spacing:0.7px;font-weight:bold;color:#0f68c4">16,80 €</div>
<div class="t" style="left:479px;top:758px;width:109px;text-align:right;font-size:12.4px;letter-spacing:0.7px;font-weight:bold;color:#0f68c4">11,20 €</div>
<div class="t" style="left:591px;top:758px;width:102px;text-align:right;font-size:12.4px;letter-spacing:0.5px;color:#4a7c59;-webkit-text-stroke:0.3px #4a7c59">16,00 €</div>
<div class="t" style="left:696px;top:759px;width:84px;text-align:center;font-size:11.2px;color:#111;-webkit-text-stroke:0.2px #111">36,4%</div>
<div class="t" style="left:780px;top:758px;width:88px;text-align:right;font-size:12.4px;letter-spacing:0.7px;font-weight:bold;color:#0f68c4">189</div>
<div class="t" style="left:871px;top:758px;width:123px;text-align:right;font-size:12.4px;letter-spacing:0.5px;color:#4a7c59;-webkit-text-stroke:0.3px #4a7c59">8.316,00 €</div>
<div class="t" style="left:997px;top:758px;width:123px;text-align:right;font-size:12.4px;letter-spacing:0.5px;color:#4a7c59;-webkit-text-stroke:0.3px #4a7c59">3.024,00 €</div>
<div style="left:59px;top:777px;width:1219px;height:24px;background:#d8d2cc"></div>
<div style="left:60px;top:777px;width:180px;height:22px;background:#f0ece7"></div>
<div style="left:242px;top:777px;width:117px;height:22px;background:#d7e7f0"></div>
<div style="left:361px;top:777px;width:117px;height:22px;background:#d7e7f0"></div>
<div style="left:480px;top:777px;width:110px;height:22px;background:#d7e7f0"></div>
<div style="left:592px;top:777px;width:104px;height:23px;background:#d5e8dc"></div>
<div style="left:697px;top:777px;width:83px;height:23px;background:#f0ece7"></div>
<div style="left:781px;top:777px;width:89px;height:22px;background:#d7e7f0"></div>
<div style="left:872px;top:777px;width:125px;height:23px;background:#d5e8dc"></div>
<div style="left:998px;top:777px;width:125px;height:23px;background:#d5e8dc"></div>
<div style="left:1124px;top:777px;width:153px;height:23px;background:#f0ece7"></div>
<div style="left:240px;top:777px;width:1px;height:24px;background:#d8d2cc"></div>
<div style="left:779px;top:777px;width:1px;height:24px;background:#d8d2cc"></div>
<div class="t" style="left:63px;top:782px;font-size:11.9px;color:#000;-webkit-text-stroke:0.1px #000">Cognitive Gummies Monthly</div>
<div class="t" style="left:241px;top:782px;width:116px;text-align:right;font-size:12.4px;letter-spacing:0.7px;font-weight:bold;color:#0f68c4">34,00 €</div>
<div class="t" style="left:360px;top:782px;width:116px;text-align:right;font-size:12.4px;letter-spacing:0.7px;font-weight:bold;color:#0f68c4">12,40 €</div>
<div class="t" style="left:479px;top:782px;width:109px;text-align:right;font-size:12.4px;letter-spacing:0.7px;font-weight:bold;color:#0f68c4">8,60 €</div>
<div class="t" style="left:591px;top:782px;width:102px;text-align:right;font-size:12.4px;letter-spacing:0.5px;color:#4a7c59;-webkit-text-stroke:0.3px #4a7c59">13,00 €</div>
<div class="t" style="left:696px;top:783px;width:84px;text-align:center;font-size:11.2px;color:#111;-webkit-text-stroke:0.2px #111">38,2%</div>
<div class="t" style="left:780px;top:782px;width:88px;text-align:right;font-size:12.4px;letter-spacing:0.7px;font-weight:bold;color:#0f68c4">164</div>
<div class="t" style="left:871px;top:782px;width:123px;text-align:right;font-size:12.4px;letter-spacing:0.5px;color:#4a7c59;-webkit-text-stroke:0.3px #4a7c59">5.576,00 €</div>
<div class="t" style="left:997px;top:782px;width:123px;text-align:right;font-size:12.4px;letter-spacing:0.5px;color:#4a7c59;-webkit-text-stroke:0.3px #4a7c59">2.132,00 €</div>
<div style="left:59px;top:801px;width:1219px;height:24px;background:#d8d2cc"></div>
<div style="left:60px;top:801px;width:180px;height:22px;background:#fff"></div>
<div style="left:242px;top:801px;width:117px;height:22px;background:#d7e7f0"></div>
<div style="left:361px;top:801px;width:117px;height:22px;background:#d7e7f0"></div>
<div style="left:480px;top:801px;width:110px;height:22px;background:#d7e7f0"></div>
<div style="left:592px;top:801px;width:104px;height:23px;background:#d5e8dc"></div>
<div style="left:697px;top:801px;width:83px;height:23px;background:#fff"></div>
<div style="left:781px;top:801px;width:89px;height:22px;background:#d7e7f0"></div>
<div style="left:872px;top:801px;width:125px;height:23px;background:#d5e8dc"></div>
<div style="left:998px;top:801px;width:125px;height:23px;background:#d5e8dc"></div>
<div style="left:1124px;top:801px;width:153px;height:23px;background:#fff"></div>
<div style="left:240px;top:801px;width:1px;height:24px;background:#d8d2cc"></div>
<div style="left:779px;top:801px;width:1px;height:24px;background:#d8d2cc"></div>
<div class="t" style="left:63px;top:806px;font-size:11.9px;color:#000;-webkit-text-stroke:0.1px #000">Memory Complex Premium</div>
<div class="t" style="left:241px;top:806px;width:116px;text-align:right;font-size:12.4px;letter-spacing:0.7px;font-weight:bold;color:#0f68c4">52,00 €</div>
<div class="t" style="left:360px;top:806px;width:116px;text-align:right;font-size:12.4px;letter-spacing:0.7px;font-weight:bold;color:#0f68c4">19,60 €</div>
<div class="t" style="left:479px;top:806px;width:109px;text-align:right;font-size:12.4px;letter-spacing:0.7px;font-weight:bold;color:#0f68c4">13,40 €</div>
<div class="t" style="left:591px;top:806px;width:102px;text-align:right;font-size:12.4px;letter-spacing:0.5px;color:#4a7c59;-webkit-text-stroke:0.3px #4a7c59">19,00 €</div>
<div class="t" style="left:696px;top:807px;width:84px;text-align:center;font-size:11.2px;color:#111;-webkit-text-stroke:0.2px #111">36,5%</div>
<div class="t" style="left:780px;top:806px;width:88px;text-align:right;font-size:12.4px;letter-spacing:0.7px;font-weight:bold;color:#0f68c4">134</div>
<div class="t" style="left:871px;top:806px;width:123px;text-align:right;font-size:12.4px;letter-spacing:0.5px;color:#4a7c59;-webkit-text-stroke:0.3px #4a7c59">6.968,00 €</div>
<div class="t" style="left:997px;top:806px;width:123px;text-align:right;font-size:12.4px;letter-spacing:0.5px;color:#4a7c59;-webkit-text-stroke:0.3px #4a7c59">2.546,00 €</div>
<div style="left:59px;top:825px;width:1219px;height:24px;background:#d8d2cc"></div>
<div style="left:60px;top:825px;width:180px;height:22px;background:#f0ece7"></div>
<div style="left:242px;top:825px;width:117px;height:22px;background:#d7e7f0"></div>
<div style="left:361px;top:825px;width:117px;height:22px;background:#d7e7f0"></div>
<div style="left:480px;top:825px;width:110px;height:22px;background:#d7e7f0"></div>
<div style="left:592px;top:825px;width:104px;height:23px;background:#d5e8dc"></div>
<div style="left:697px;top:825px;width:83px;height:23px;background:#f0ece7"></div>
<div style="left:781px;top:825px;width:89px;height:22px;background:#d7e7f0"></div>
<div style="left:872px;top:825px;width:125px;height:23px;background:#d5e8dc"></div>
<div style="left:998px;top:825px;width:125px;height:23px;background:#d5e8dc"></div>
<div style="left:1124px;top:825px;width:153px;height:23px;background:#f0ece7"></div>
<div style="left:240px;top:825px;width:1px;height:24px;background:#d8d2cc"></div>
<div style="left:779px;top:825px;width:1px;height:24px;background:#d8d2cc"></div>
<div class="t" style="left:63px;top:830px;font-size:11.9px;color:#000;-webkit-text-stroke:0.1px #000">Blue Light Glasses Pro</div>
<div class="t" style="left:241px;top:830px;width:116px;text-align:right;font-size:12.4px;letter-spacing:0.7px;font-weight:bold;color:#0f68c4">36,00 €</div>
<div class="t" style="left:360px;top:830px;width:116px;text-align:right;font-size:12.4px;letter-spacing:0.7px;font-weight:bold;color:#0f68c4">11,20 €</div>
<div class="t" style="left:479px;top:830px;width:109px;text-align:right;font-size:12.4px;letter-spacing:0.7px;font-weight:bold;color:#0f68c4">9,40 €</div>
<div class="t" style="left:591px;top:830px;width:102px;text-align:right;font-size:12.4px;letter-spacing:0.5px;color:#4a7c59;-webkit-text-stroke:0.3px #4a7c59">15,40 €</div>
<div class="t" style="left:696px;top:831px;width:84px;text-align:center;font-size:11.2px;color:#111;-webkit-text-stroke:0.2px #111">42,8%</div>
<div class="t" style="left:780px;top:830px;width:88px;text-align:right;font-size:12.4px;letter-spacing:0.7px;font-weight:bold;color:#0f68c4">124</div>
<div class="t" style="left:871px;top:830px;width:123px;text-align:right;font-size:12.4px;letter-spacing:0.5px;color:#4a7c59;-webkit-text-stroke:0.3px #4a7c59">4.464,00 €</div>
<div class="t" style="left:997px;top:830px;width:123px;text-align:right;font-size:12.4px;letter-spacing:0.5px;color:#4a7c59;-webkit-text-stroke:0.3px #4a7c59">1.909,60 €</div>
<div style="left:59px;top:849px;width:1219px;height:24px;background:#d8d2cc"></div>
<div style="left:60px;top:849px;width:180px;height:22px;background:#fff"></div>
<div style="left:242px;top:849px;width:117px;height:22px;background:#d7e7f0"></div>
<div style="left:361px;top:849px;width:117px;height:22px;background:#d7e7f0"></div>
<div style="left:480px;top:849px;width:110px;height:22px;background:#d7e7f0"></div>
<div style="left:592px;top:849px;width:104px;height:23px;background:#d5e8dc"></div>
<div style="left:697px;top:849px;width:83px;height:23px;background:#fff"></div>
<div style="left:781px;top:849px;width:89px;height:22px;background:#d7e7f0"></div>
<div style="left:872px;top:849px;width:125px;height:23px;background:#d5e8dc"></div>
<div style="left:998px;top:849px;width:125px;height:23px;background:#d5e8dc"></div>
<div style="left:1124px;top:849px;width:153px;height:23px;background:#fff"></div>
<div style="left:240px;top:849px;width:1px;height:24px;background:#d8d2cc"></div>
<div style="left:779px;top:849px;width:1px;height:24px;background:#d8d2cc"></div>
<div class="t" style="left:63px;top:854px;font-size:11.9px;color:#000;-webkit-text-stroke:0.1px #000">Posture Corrector Smart</div>
<div class="t" style="left:241px;top:854px;width:116px;text-align:right;font-size:12.4px;letter-spacing:0.7px;font-weight:bold;color:#0f68c4">42,00 €</div>
<div class="t" style="left:360px;top:854px;width:116px;text-align:right;font-size:12.4px;letter-spacing:0.7px;font-weight:bold;color:#0f68c4">14,80 €</div>
<div class="t" style="left:479px;top:854px;width:109px;text-align:right;font-size:12.4px;letter-spacing:0.7px;font-weight:bold;color:#0f68c4">10,80 €</div>
<div class="t" style="left:591px;top:854px;width:102px;text-align:right;font-size:12.4px;letter-spacing:0.5px;color:#4a7c59;-webkit-text-stroke:0.3px #4a7c59">16,40 €</div>
<div class="t" style="left:696px;top:855px;width:84px;text-align:center;font-size:11.2px;color:#111;-webkit-text-stroke:0.2px #111">39,0%</div>
<div class="t" style="left:780px;top:854px;width:88px;text-align:right;font-size:12.4px;letter-spacing:0.7px;font-weight:bold;color:#0f68c4">97</div>
<div class="t" style="left:871px;top:854px;width:123px;text-align:right;font-size:12.4px;letter-spacing:0.5px;color:#4a7c59;-webkit-text-stroke:0.3px #4a7c59">4.074,00 €</div>
<div class="t" style="left:997px;top:854px;width:123px;text-align:right;font-size:12.4px;letter-spacing:0.5px;color:#4a7c59;-webkit-text-stroke:0.3px #4a7c59">1.590,80 €</div>
<div style="left:59px;top:873px;width:1219px;height:24px;background:#d8d2cc"></div>
<div style="left:60px;top:873px;width:180px;height:22px;background:#f0ece7"></div>
<div style="left:242px;top:873px;width:117px;height:22px;background:#d7e7f0"></div>
<div style="left:361px;top:873px;width:117px;height:22px;background:#d7e7f0"></div>
<div style="left:480px;top:873px;width:110px;height:22px;background:#d7e7f0"></div>
<div style="left:592px;top:873px;width:104px;height:23px;background:#d5e8dc"></div>
<div style="left:697px;top:873px;width:83px;height:23px;background:#f0ece7"></div>
<div style="left:781px;top:873px;width:89px;height:22px;background:#d7e7f0"></div>
<div style="left:872px;top:873px;width:125px;height:23px;background:#d5e8dc"></div>
<div style="left:998px;top:873px;width:125px;height:23px;background:#d5e8dc"></div>
<div style="left:1124px;top:873px;width:153px;height:23px;background:#f0ece7"></div>
<div style="left:240px;top:873px;width:1px;height:24px;background:#d8d2cc"></div>
<div style="left:779px;top:873px;width:1px;height:24px;background:#d8d2cc"></div>
<div class="t" style="left:63px;top:878px;font-size:11.9px;color:#000;-webkit-text-stroke:0.1px #000">Mindfulness T-Shirt Design</div>
<div class="t" style="left:241px;top:878px;width:116px;text-align:right;font-size:12.4px;letter-spacing:0.7px;font-weight:bold;color:#0f68c4">29,00 €</div>
<div class="t" style="left:360px;top:878px;width:116px;text-align:right;font-size:12.4px;letter-spacing:0.7px;font-weight:bold;color:#0f68c4">12,40 €</div>
<div class="t" style="left:479px;top:878px;width:109px;text-align:right;font-size:12.4px;letter-spacing:0.7px;font-weight:bold;color:#0f68c4">6,80 €</div>
<div class="t" style="left:591px;top:878px;width:102px;text-align:right;font-size:12.4px;letter-spacing:0.5px;color:#4a7c59;-webkit-text-stroke:0.3px #4a7c59">9,80 €</div>
<div class="t" style="left:696px;top:879px;width:84px;text-align:center;font-size:11.2px;color:#111;-webkit-text-stroke:0.2px #111">33,8%</div>
<div class="t" style="left:780px;top:878px;width:88px;text-align:right;font-size:12.4px;letter-spacing:0.7px;font-weight:bold;color:#0f68c4">142</div>
<div class="t" style="left:871px;top:878px;width:123px;text-align:right;font-size:12.4px;letter-spacing:0.5px;color:#4a7c59;-webkit-text-stroke:0.3px #4a7c59">4.118,00 €</div>
<div class="t" style="left:997px;top:878px;width:123px;text-align:right;font-size:12.4px;letter-spacing:0.5px;color:#4a7c59;-webkit-text-stroke:0.3px #4a7c59">1.391,60 €</div>
<div style="left:46px;top:165px;width:1232px;height:49px;border:2px solid #2664ec"></div>
<svg style="left:909px;top:517px" width="20" height="30" viewBox="0 0 20 30"><path d="M1.4 1.3V24.6L6.5 20 10.3 27.3 14.7 25.4 11.8 19.6H18.8z" fill="#fff" stroke="#000" stroke-width="1.1" stroke-linejoin="miter"/></svg>
<div style="left:0;top:896px;width:1908px;height:1px;background:#c7c7c7"></div>
<div style="left:0;top:897px;width:1920px;height:11px;background:#fff"></div>
<div style="left:45px;top:897px;width:1px;height:11px;background:#c7c7c7"></div>
<div style="left:48px;top:898px;width:1585px;height:8px;background:#dadada;border-radius:4px"></div>
<div style="left:1877px;top:897px;width:31px;height:11px;background:#f8f8f8"></div>
<div style="left:1877px;top:897px;width:1px;height:11px;background:#c7c7c7"></div>
<div style="left:1893px;top:897px;width:1px;height:11px;background:#c7c7c7"></div>
<svg style="left:1883px;top:899px" width="4" height="7" viewBox="0 0 4 7"><path d="M4 0v7L0 3.5z" fill="#8a8a8a"/></svg>
<svg style="left:1899px;top:899px" width="4" height="7" viewBox="0 0 4 7"><path d="M0 0v7l4-3.5z" fill="#8a8a8a"/></svg>
<div style="left:0;top:908px;width:1920px;height:1px;background:#c7c7c7"></div>
<div style="left:1909px;top:142px;width:11px;height:754px;background:#fff"></div>
<div style="left:1909px;top:142px;width:11px;height:298px;background:#f8f8f8"></div>
<div style="left:1909px;top:165px;width:11px;height:2px;background:#e3ebf7"></div>
<div style="left:1908px;top:142px;width:1px;height:766px;background:#c7c7c7"></div>
<div style="left:1910px;top:442px;width:9px;height:26px;background:#dadada;border-radius:4.5px"></div>
<div style="left:1909px;top:864px;width:11px;height:32px;background:#f8f8f8"></div>
<div style="left:1909px;top:863px;width:11px;height:1px;background:#c7c7c7"></div>
<div style="left:1909px;top:879px;width:11px;height:1px;background:#c7c7c7"></div>
<svg style="left:1911px;top:869px" width="7" height="4" viewBox="0 0 7 4"><path d="M0 4h7L3.5 0z" fill="#8a8a8a"/></svg>
<svg style="left:1911px;top:886px" width="7" height="4" viewBox="0 0 7 4"><path d="M0 0h7L3.5 4z" fill="#8a8a8a"/></svg>
<div style="left:0;top:909px;width:1920px;height:36px;background:#f9fbfd"></div>
<svg style="left:56px;top:922px" width="12" height="12" viewBox="0 0 12 12"><path d="M6 0v12M0 6h12" stroke="#444746" stroke-width="1.8"/></svg>
<svg style="left:94px;top:922px" width="15" height="12" viewBox="0 0 15 12"><path d="M0 1h15M0 6h15M0 11h15" stroke="#444746" stroke-width="1.8"/></svg>
<div style="left:135px;top:942px;width:151px;height:3px;background:#4a7c59"></div>
<svg style="left:151px;top:920px" width="10" height="15" viewBox="0 0 10 15"><path d="M6.5 0L1 8.5h3.8L3 15l6-8.8H5.2z" fill="#f4811f"/></svg>
<div class="t" style="left:170px;top:920px;font-size:15.5px;font-weight:normal;color:#444746">Visual Home</div>
<svg style="left:266px;top:927px" width="8" height="4" viewBox="0 0 8 4"><path d="M0 0h8L4 4z" fill="#444746"/></svg>
<div style="left:287px;top:942px;width:138px;height:3px;background:#4a7c59"></div>
<svg style="left:302px;top:920px" width="14" height="14" viewBox="0 0 14 14"><path d="M7 1L0.5 7h1.8v6.5h9.4V7h1.8z" fill="#e8813a"/><rect x="3.5" y="7" width="7" height="6" fill="#f5d9a8"/><rect x="6" y="9" width="2.5" height="4.5" fill="#7a5230"/><rect x="3.8" y="8" width="2" height="2" fill="#5aa9e6"/><path d="M0 13.5h14" stroke="#5cb85c" stroke-width="1"/></svg>
<div class="t" style="left:322px;top:920px;font-size:15.5px;font-weight:normal;color:#444746">Start Here</div>
<svg style="left:405px;top:927px" width="8" height="4" viewBox="0 0 8 4"><path d="M0 0h8L4 4z" fill="#444746"/></svg>
<div style="left:426px;top:942px;width:142px;height:3px;background:#5b7288"></div>
<svg style="left:440px;top:920px" width="14" height="14" viewBox="0 0 14 14"><rect x="0" y="0" width="14" height="14" rx="1.5" fill="#dcdce4"/><rect x="2" y="7" width="2.5" height="6" fill="#e84f76"/><rect x="5.7" y="4" width="2.5" height="9" fill="#4caf50"/><rect x="9.5" y="2" width="2.5" height="11" fill="#3f7fd8"/></svg>
<div class="t" style="left:462px;top:920px;font-size:15.5px;font-weight:normal;color:#444746">Dashboard</div>
<svg style="left:547px;top:927px" width="8" height="4" viewBox="0 0 8 4"><path d="M0 0h8L4 4z" fill="#444746"/></svg>
<div style="left:569px;top:942px;width:159px;height:3px;background:#4a7c59"></div>
<svg style="left:584px;top:921px" width="14" height="13" viewBox="0 0 14 13"><rect x="1" y="5" width="12" height="8" fill="#a9c4e8"/><path d="M0 3h14v3H0z" fill="#e84f76"/><rect x="3" y="0" width="8" height="3" fill="#7a7a8a"/><rect x="3" y="8" width="3" height="5" fill="#4a6fa5"/><rect x="7.5" y="7.5" width="4" height="3" fill="#dff0ff"/></svg>
<div class="t" style="left:604px;top:920px;font-size:15.5px;font-weight:normal;color:#444746">Store Tracker</div>
<svg style="left:709px;top:927px" width="8" height="4" viewBox="0 0 8 4"><path d="M0 0h8L4 4z" fill="#444746"/></svg>
<div style="left:729px;top:942px;width:149px;height:3px;background:#5b7288"></div>
<svg style="left:744px;top:920px" width="15" height="14" viewBox="0 0 15 14"><path d="M2 8.5L9.5 1.5 13.5 10 3.5 11.5z" fill="#f2a33a"/><path d="M9.5 1.5L13.5 10" stroke="#d9822b" stroke-width="2"/><rect x="3" y="10" width="3" height="3.5" fill="#c06a20"/></svg>
<div class="t" style="left:765px;top:920px;font-size:15.5px;font-weight:normal;color:#444746">Ads Tracker</div>
<svg style="left:859px;top:927px" width="8" height="4" viewBox="0 0 8 4"><path d="M0 0h8L4 4z" fill="#444746"/></svg>
<div style="left:879px;top:942px;width:184px;height:3px;background:#5b7288"></div>
<svg style="left:895px;top:920px" width="12" height="15" viewBox="0 0 12 15"><rect x="0.5" y="6" width="11" height="8.5" rx="1" fill="#3f6fb5"/><rect x="0.5" y="12" width="11" height="2.5" fill="#9a8fd0"/><path d="M6 0v7M3 4.5L6 7.5 9 4.5" fill="none" stroke="#e03a3a" stroke-width="2"/></svg>
<div class="t" style="left:914px;top:920px;font-size:15.5px;font-weight:normal;color:#444746">Import Meta CSV</div>
<svg style="left:1044px;top:927px" width="8" height="4" viewBox="0 0 8 4"><path d="M0 0h8L4 4z" fill="#444746"/></svg>
<div style="left:1064px;top:942px;width:130px;height:3px;background:#5b7288"></div>
<svg style="left:1079px;top:920px" width="14" height="15" viewBox="0 0 14 15"><rect x="0.5" y="1.5" width="13" height="13" rx="2" fill="#e8e3f5"/><path d="M.5 3.5a2 2 0 0 1 2-2h9a2 2 0 0 1 2 2V5H.5z" fill="#4a8df0"/><path d="M3 7h1.5M6.2 7h1.5M9.5 7H11M3 9.5h1.5M6.2 9.5h1.5M9.5 9.5H11M3 12h1.5M6.2 12h1.5M9.5 12H11" stroke="#8a7bd0" stroke-width="1.3"/></svg>
<div class="t" style="left:1099px;top:920px;font-size:15.5px;font-weight:normal;color:#444746">Calendar</div>
<svg style="left:1174px;top:927px" width="8" height="4" viewBox="0 0 8 4"><path d="M0 0h8L4 4z" fill="#444746"/></svg>
<div style="left:1194px;top:909px;width:131px;height:36px;background:#e0e5ec"></div>
<div style="left:1194px;top:942px;width:131px;height:3px;background:#8b6f47"></div>
<svg style="left:1208px;top:920px" width="14" height="14" viewBox="0 0 20 20"><path d="M10 1L18.5 5v10L10 19 1.5 15V5z" fill="#c98a4b"/><path d="M1.5 5L10 9v10L1.5 15z" fill="#e0a868"/><path d="M10 9L18.5 5v10L10 19z" fill="#b87a3e"/><path d="M10 1L18.5 5 10 9 1.5 5z" fill="#f0c48a"/><path d="M5.5 3L14 7.2v3" fill="none" stroke="#8a5a2a" stroke-width="1.6"/></svg>
<div class="t" style="left:1230px;top:920px;font-size:15.5px;font-weight:bold;color:#0b57d0">Products</div>
<svg style="left:1305px;top:927px" width="8" height="4" viewBox="0 0 8 4"><path d="M0 0h8L4 4z" fill="#0b57d0"/></svg>
<div style="left:1325px;top:942px;width:162px;height:3px;background:#5b7288"></div>
<svg style="left:1340px;top:921px" width="14" height="14" viewBox="0 0 14 14"><path d="M5.2 5.2L12.2 12.2" stroke="#c3bfd2" stroke-width="2.6" stroke-linecap="round"/><path d="M.6 3.2A3.6 3.6 0 0 0 6.6 6.6 3.6 3.6 0 0 0 3.2.6L4.8 3.2 3.2 4.8z" fill="#c3bfd2"/></svg>
<div class="t" style="left:1360px;top:920px;font-size:15.5px;font-weight:normal;color:#444746">Subscriptions</div>
<svg style="left:1467px;top:927px" width="8" height="4" viewBox="0 0 8 4"><path d="M0 0h8L4 4z" fill="#444746"/></svg>
<div style="left:1488px;top:942px;width:106px;height:3px;background:#b8860b"></div>
<svg style="left:1502px;top:919px" width="15" height="15" viewBox="0 0 15 15"><circle cx="6.5" cy="8.5" r="6.2" fill="#e2336b"/><circle cx="6.5" cy="8.5" r="4.2" fill="#f7d0dc"/><circle cx="6.5" cy="8.5" r="2.5" fill="#e2336b"/><path d="M6.5 8.5L13 2M10.5 1.5l.5 2.5 2.5.5" fill="none" stroke="#3a8fd8" stroke-width="1.6"/></svg>
<div class="t" style="left:1524px;top:920px;font-size:15.5px;font-weight:normal;color:#444746">Goals</div>
<svg style="left:1574px;top:927px" width="8" height="4" viewBox="0 0 8 4"><path d="M0 0h8L4 4z" fill="#444746"/></svg>
<div style="left:1595px;top:942px;width:92px;height:3px;background:#3d4f5e"></div>
<svg style="left:1610px;top:920px" width="15" height="15" viewBox="0 0 15 15"><path d="M7.5 1v12M2 3.5h11M4.5 13.5h6" stroke="#d4913a" stroke-width="1.4"/><path d="M0.5 8.5L2.8 3.5 5 8.5a2.3 1.8 0 0 1-4.5 0zM10 8.5l2.3-5 2.2 5a2.3 1.8 0 0 1-4.5 0z" fill="#f3b34a"/></svg>
<div class="t" style="left:1631px;top:920px;width:56px;overflow:hidden;font-size:15.5px;font-weight:normal;color:#444746">Break-E</div>
<div style="left:1688px;top:917px;width:1px;height:19px;background:#747775"></div>
<svg style="left:1708px;top:923px" width="7" height="11" viewBox="0 0 7 11"><path d="M6 1L1.5 5.5 6 10" fill="none" stroke="#b0b3b8" stroke-width="1.6"/></svg>
<svg style="left:1748px;top:923px" width="7" height="11" viewBox="0 0 7 11"><path d="M1 1l4.5 4.5L1 10" fill="none" stroke="#444746" stroke-width="1.8"/></svg>
<svg style="left:1889px;top:923px" width="7" height="11" viewBox="0 0 7 11"><path d="M6 1L1.5 5.5 6 10" fill="none" stroke="#444746" stroke-width="1.8"/></svg>
</body></html>
